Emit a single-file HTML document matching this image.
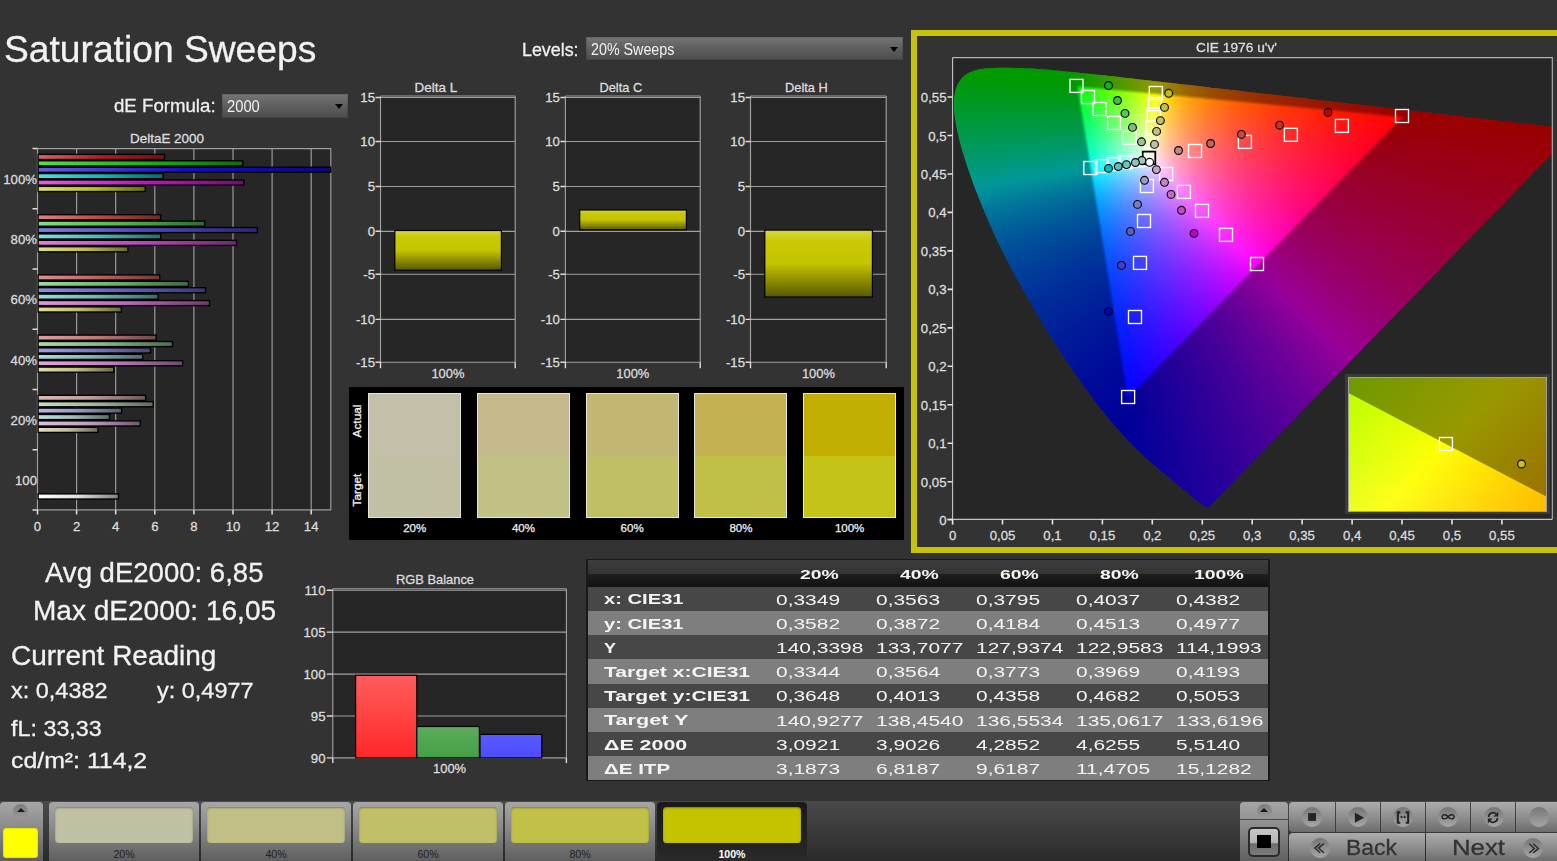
<!DOCTYPE html><html><head><meta charset="utf-8"><title>Saturation Sweeps</title><style>

html,body{margin:0;padding:0}
html{background:#333333;overflow:hidden}
body{width:1557px;height:861px;background:#333333;overflow:hidden;position:relative;font-family:"Liberation Sans",sans-serif;color:#e6e6e6}
.a{position:absolute}
.t{position:absolute;white-space:nowrap;line-height:1;transform-origin:0 50%}
svg{overflow:visible}
svg text{font-family:"Liberation Sans",sans-serif}
.dd{position:absolute;box-sizing:border-box;box-shadow:inset 0 0 0 1px rgba(0,0,0,.12);background:linear-gradient(#757575,#5e5e5e 50%,#4d4d4d)}
i{position:absolute;display:block}
.dd:after{content:"";position:absolute;right:5.2px;top:10.1px;border-left:4.4px solid transparent;border-right:4.4px solid transparent;border-top:5.2px solid #000}

</style></head><body>
<div class="t" style="left:4.4px;top:31.3px;font-size:37.40px;transform:scaleX(0.995);-webkit-text-stroke:.3px;color:#f2f2f2;">Saturation Sweeps</div>
<div class="t" style="left:113.6px;top:97.2px;font-size:18.40px;transform:scaleX(1.014);-webkit-text-stroke:.3px;color:#f0f0f0;">dE Formula:</div>
<div class="dd" style="left:221.6px;top:93.9px;width:126.6px;height:24.3px"></div>
<div class="t" style="left:226.7px;top:99.4px;font-size:16.00px;transform:scaleX(0.921);color:#f0f0f0;">2000</div>
<div class="t" style="left:522.0px;top:41.3px;font-size:18.00px;transform:scaleX(0.992);-webkit-text-stroke:.3px;color:#f0f0f0;">Levels:</div>
<div class="dd" style="left:585.6px;top:36.8px;width:317.6px;height:23.4px"></div>
<div class="t" style="left:591.0px;top:42.2px;font-size:16.00px;transform:scaleX(0.893);color:#f0f0f0;">20% Sweeps</div>
<svg class="a" style="left:0px;top:130px" width="350" height="412" viewBox="0 130 350 412" ><defs><linearGradient id="dR0"><stop offset="0" stop-color="#e06060"/><stop offset=".5" stop-color="#c01818"/><stop offset="1" stop-color="#701010"/></linearGradient><linearGradient id="dR1"><stop offset="0" stop-color="#e08080"/><stop offset=".5" stop-color="#c04848"/><stop offset="1" stop-color="#702828"/></linearGradient><linearGradient id="dR2"><stop offset="0" stop-color="#e09090"/><stop offset=".5" stop-color="#c06060"/><stop offset="1" stop-color="#703838"/></linearGradient><linearGradient id="dR3"><stop offset="0" stop-color="#e0a0a0"/><stop offset=".5" stop-color="#c07878"/><stop offset="1" stop-color="#704848"/></linearGradient><linearGradient id="dR4"><stop offset="0" stop-color="#e0b8b8"/><stop offset=".5" stop-color="#c09898"/><stop offset="1" stop-color="#705858"/></linearGradient><linearGradient id="dG0"><stop offset="0" stop-color="#50e050"/><stop offset=".5" stop-color="#18b818"/><stop offset="1" stop-color="#0c6c0c"/></linearGradient><linearGradient id="dG1"><stop offset="0" stop-color="#80e080"/><stop offset=".5" stop-color="#50b850"/><stop offset="1" stop-color="#2c6c2c"/></linearGradient><linearGradient id="dG2"><stop offset="0" stop-color="#98e098"/><stop offset=".5" stop-color="#68b868"/><stop offset="1" stop-color="#3c6c3c"/></linearGradient><linearGradient id="dG3"><stop offset="0" stop-color="#a8e0a8"/><stop offset=".5" stop-color="#80b880"/><stop offset="1" stop-color="#4c6c4c"/></linearGradient><linearGradient id="dG4"><stop offset="0" stop-color="#c0e0c0"/><stop offset=".5" stop-color="#a0b8a0"/><stop offset="1" stop-color="#5c6c5c"/></linearGradient><linearGradient id="dB0"><stop offset="0" stop-color="#6060e0"/><stop offset=".5" stop-color="#1010c8"/><stop offset="1" stop-color="#080880"/></linearGradient><linearGradient id="dB1"><stop offset="0" stop-color="#8080e0"/><stop offset=".5" stop-color="#4848c0"/><stop offset="1" stop-color="#282878"/></linearGradient><linearGradient id="dB2"><stop offset="0" stop-color="#9090e0"/><stop offset=".5" stop-color="#6060c0"/><stop offset="1" stop-color="#383878"/></linearGradient><linearGradient id="dB3"><stop offset="0" stop-color="#a0a0e0"/><stop offset=".5" stop-color="#7878c0"/><stop offset="1" stop-color="#484878"/></linearGradient><linearGradient id="dB4"><stop offset="0" stop-color="#b8b8e0"/><stop offset=".5" stop-color="#9898c0"/><stop offset="1" stop-color="#585878"/></linearGradient><linearGradient id="dC0"><stop offset="0" stop-color="#50e0e0"/><stop offset=".5" stop-color="#10b8b8"/><stop offset="1" stop-color="#086c6c"/></linearGradient><linearGradient id="dC1"><stop offset="0" stop-color="#80e0e0"/><stop offset=".5" stop-color="#50b8b8"/><stop offset="1" stop-color="#2c6c6c"/></linearGradient><linearGradient id="dC2"><stop offset="0" stop-color="#98e0e0"/><stop offset=".5" stop-color="#68b8b8"/><stop offset="1" stop-color="#3c6c6c"/></linearGradient><linearGradient id="dC3"><stop offset="0" stop-color="#a8e0e0"/><stop offset=".5" stop-color="#80b8b8"/><stop offset="1" stop-color="#4c6c6c"/></linearGradient><linearGradient id="dC4"><stop offset="0" stop-color="#c0e0e0"/><stop offset=".5" stop-color="#a0b8b8"/><stop offset="1" stop-color="#5c6c6c"/></linearGradient><linearGradient id="dM0"><stop offset="0" stop-color="#e060e0"/><stop offset=".5" stop-color="#c018c0"/><stop offset="1" stop-color="#701070"/></linearGradient><linearGradient id="dM1"><stop offset="0" stop-color="#e080e0"/><stop offset=".5" stop-color="#c048c0"/><stop offset="1" stop-color="#702870"/></linearGradient><linearGradient id="dM2"><stop offset="0" stop-color="#e098e0"/><stop offset=".5" stop-color="#c068c0"/><stop offset="1" stop-color="#703870"/></linearGradient><linearGradient id="dM3"><stop offset="0" stop-color="#e0a8e0"/><stop offset=".5" stop-color="#c080c0"/><stop offset="1" stop-color="#704870"/></linearGradient><linearGradient id="dM4"><stop offset="0" stop-color="#e0c0e0"/><stop offset=".5" stop-color="#c0a0c0"/><stop offset="1" stop-color="#705870"/></linearGradient><linearGradient id="dY0"><stop offset="0" stop-color="#e0e060"/><stop offset=".5" stop-color="#c0c018"/><stop offset="1" stop-color="#6c6c10"/></linearGradient><linearGradient id="dY1"><stop offset="0" stop-color="#e0e080"/><stop offset=".5" stop-color="#c0c050"/><stop offset="1" stop-color="#6c6c2c"/></linearGradient><linearGradient id="dY2"><stop offset="0" stop-color="#e0e098"/><stop offset=".5" stop-color="#c0c068"/><stop offset="1" stop-color="#6c6c3c"/></linearGradient><linearGradient id="dY3"><stop offset="0" stop-color="#e0e0a8"/><stop offset=".5" stop-color="#c0c080"/><stop offset="1" stop-color="#6c6c4c"/></linearGradient><linearGradient id="dY4"><stop offset="0" stop-color="#e0e0c0"/><stop offset=".5" stop-color="#c0c0a0"/><stop offset="1" stop-color="#6c6c5c"/></linearGradient><linearGradient id="dW"><stop offset="0" stop-color="#ffffff"/><stop offset=".5" stop-color="#e0e0e0"/><stop offset="1" stop-color="#808080"/></linearGradient></defs><rect x="37.5" y="148.6" width="293.2" height="361.3" fill="#262626"/><path d="M76.6 148.6V509.9M115.7 148.6V509.9M154.8 148.6V509.9M193.9 148.6V509.9M233.0 148.6V509.9M272.1 148.6V509.9M311.2 148.6V509.9M37.5 148.6V509.9M330.8 148.6V509.9M37.5 148.6H330.8M37.5 509.9H330.8" stroke="#9e9e9e" stroke-width="1.15" fill="none"/><path d="M76.6 509.9V514.4M115.7 509.9V514.4M154.8 509.9V514.4M193.9 509.9V514.4M233.0 509.9V514.4M272.1 509.9V514.4M311.2 509.9V514.4M37.5 509.9V514.4M32.5 148.6H37.5M32.5 208.8H37.5M32.5 269.0H37.5M32.5 329.3H37.5M32.5 389.5H37.5M32.5 449.7H37.5M32.5 509.9H37.5" stroke="#dedede" stroke-width="1.5" fill="none"/><rect x="38.1" y="154.4" width="126.5" height="5.1" fill="url(#dR0)" stroke="#000" stroke-width="1.35"/><rect x="38.1" y="160.8" width="204.7" height="5.1" fill="url(#dG0)" stroke="#000" stroke-width="1.35"/><rect x="38.1" y="167.2" width="292.6" height="5.1" fill="url(#dB0)" stroke="#000" stroke-width="1.35"/><rect x="38.1" y="173.6" width="125.1" height="5.1" fill="url(#dC0)" stroke="#000" stroke-width="1.35"/><rect x="38.1" y="180.0" width="205.7" height="5.1" fill="url(#dM0)" stroke="#000" stroke-width="1.35"/><rect x="38.1" y="186.4" width="107.2" height="5.1" fill="url(#dY0)" stroke="#000" stroke-width="1.35"/><rect x="38.1" y="214.7" width="122.6" height="5.1" fill="url(#dR1)" stroke="#000" stroke-width="1.35"/><rect x="38.1" y="221.1" width="166.6" height="5.1" fill="url(#dG1)" stroke="#000" stroke-width="1.35"/><rect x="38.1" y="227.5" width="219.3" height="5.1" fill="url(#dB1)" stroke="#000" stroke-width="1.35"/><rect x="38.1" y="233.9" width="122.6" height="5.1" fill="url(#dC1)" stroke="#000" stroke-width="1.35"/><rect x="38.1" y="240.3" width="198.4" height="5.1" fill="url(#dM1)" stroke="#000" stroke-width="1.35"/><rect x="38.1" y="246.7" width="89.8" height="5.1" fill="url(#dY1)" stroke="#000" stroke-width="1.35"/><rect x="38.1" y="274.9" width="121.6" height="5.1" fill="url(#dR2)" stroke="#000" stroke-width="1.35"/><rect x="38.1" y="281.3" width="150.3" height="5.1" fill="url(#dG2)" stroke="#000" stroke-width="1.35"/><rect x="38.1" y="287.7" width="167.5" height="5.1" fill="url(#dB2)" stroke="#000" stroke-width="1.35"/><rect x="38.1" y="294.1" width="120.0" height="5.1" fill="url(#dC2)" stroke="#000" stroke-width="1.35"/><rect x="38.1" y="300.5" width="171.4" height="5.1" fill="url(#dM2)" stroke="#000" stroke-width="1.35"/><rect x="38.1" y="306.9" width="83.2" height="5.1" fill="url(#dY2)" stroke="#000" stroke-width="1.35"/><rect x="38.1" y="335.1" width="118.1" height="5.1" fill="url(#dR3)" stroke="#000" stroke-width="1.35"/><rect x="38.1" y="341.5" width="134.3" height="5.1" fill="url(#dG3)" stroke="#000" stroke-width="1.35"/><rect x="38.1" y="347.9" width="112.4" height="5.1" fill="url(#dB3)" stroke="#000" stroke-width="1.35"/><rect x="38.1" y="354.3" width="104.6" height="5.1" fill="url(#dC3)" stroke="#000" stroke-width="1.35"/><rect x="38.1" y="360.7" width="144.5" height="5.1" fill="url(#dM3)" stroke="#000" stroke-width="1.35"/><rect x="38.1" y="367.1" width="75.7" height="5.1" fill="url(#dY3)" stroke="#000" stroke-width="1.35"/><rect x="38.1" y="395.3" width="107.5" height="5.1" fill="url(#dR4)" stroke="#000" stroke-width="1.35"/><rect x="38.1" y="401.7" width="115.1" height="5.1" fill="url(#dG4)" stroke="#000" stroke-width="1.35"/><rect x="38.1" y="408.1" width="83.5" height="5.1" fill="url(#dB4)" stroke="#000" stroke-width="1.35"/><rect x="38.1" y="414.5" width="71.3" height="5.1" fill="url(#dC4)" stroke="#000" stroke-width="1.35"/><rect x="38.1" y="420.9" width="102.2" height="5.1" fill="url(#dM4)" stroke="#000" stroke-width="1.35"/><rect x="38.1" y="427.3" width="59.9" height="5.1" fill="url(#dY4)" stroke="#000" stroke-width="1.35"/><rect x="38.1" y="493.9" width="80.3" height="5.1" fill="url(#dW)" stroke="#000" stroke-width="1.35"/><text x="37.0" y="183.9" font-size="13.20" fill="#dcdcdc" stroke="#dcdcdc" stroke-width=".3" text-anchor="end" >100%</text><text x="37.0" y="244.1" font-size="13.20" fill="#dcdcdc" stroke="#dcdcdc" stroke-width=".3" text-anchor="end" >80%</text><text x="37.0" y="304.3" font-size="13.20" fill="#dcdcdc" stroke="#dcdcdc" stroke-width=".3" text-anchor="end" >60%</text><text x="37.0" y="364.6" font-size="13.20" fill="#dcdcdc" stroke="#dcdcdc" stroke-width=".3" text-anchor="end" >40%</text><text x="37.0" y="424.8" font-size="13.20" fill="#dcdcdc" stroke="#dcdcdc" stroke-width=".3" text-anchor="end" >20%</text><text x="37.0" y="485.0" font-size="13.20" fill="#dcdcdc" stroke="#dcdcdc" stroke-width=".3" text-anchor="end" >100</text><text x="37.5" y="531.0" font-size="13.20" fill="#dcdcdc" stroke="#dcdcdc" stroke-width=".3" text-anchor="middle" >0</text><text x="76.6" y="531.0" font-size="13.20" fill="#dcdcdc" stroke="#dcdcdc" stroke-width=".3" text-anchor="middle" >2</text><text x="115.7" y="531.0" font-size="13.20" fill="#dcdcdc" stroke="#dcdcdc" stroke-width=".3" text-anchor="middle" >4</text><text x="154.8" y="531.0" font-size="13.20" fill="#dcdcdc" stroke="#dcdcdc" stroke-width=".3" text-anchor="middle" >6</text><text x="193.9" y="531.0" font-size="13.20" fill="#dcdcdc" stroke="#dcdcdc" stroke-width=".3" text-anchor="middle" >8</text><text x="233.0" y="531.0" font-size="13.20" fill="#dcdcdc" stroke="#dcdcdc" stroke-width=".3" text-anchor="middle" >10</text><text x="272.1" y="531.0" font-size="13.20" fill="#dcdcdc" stroke="#dcdcdc" stroke-width=".3" text-anchor="middle" >12</text><text x="311.2" y="531.0" font-size="13.20" fill="#dcdcdc" stroke="#dcdcdc" stroke-width=".3" text-anchor="middle" >14</text><text x="167.0" y="143.0" font-size="13.20" fill="#dcdcdc" stroke="#dcdcdc" stroke-width=".3" text-anchor="middle" textLength="74.0" lengthAdjust="spacingAndGlyphs" >DeltaE 2000</text></svg>
<svg class="a" style="left:345px;top:75px" width="560" height="310" viewBox="345 75 560 310" ><defs><linearGradient id="yb" x1="0" y1="0" x2="0" y2="1"><stop offset="0" stop-color="#d8d848"/><stop offset=".16" stop-color="#c9c906"/><stop offset=".5" stop-color="#c4c400"/><stop offset="1" stop-color="#585800"/></linearGradient></defs><rect x="380.5" y="96.2" width="134.7" height="266.0" fill="#262626"/><path d="M380.5 97.5H515.2M380.5 141.5H515.2M380.5 186.5H515.2M380.5 231.3H515.2M380.5 274.2H515.2M380.5 319.4H515.2M380.5 362.2H515.2M380.5 96.0H515.2M380.5 96.0V362.2M515.2 96.0V362.2" stroke="#a0a0a0" stroke-width="1.15" fill="none"/><path d="M375.5 97.5H380.5M375.5 141.5H380.5M375.5 186.5H380.5M375.5 231.3H380.5M375.5 274.2H380.5M375.5 319.4H380.5M375.5 362.2H380.5M380.5 362.2V368.2M515.2 362.2V368.2" stroke="#dcdcdc" stroke-width="1.4" fill="none"/><rect x="394.8" y="230.5" width="106.6" height="39.7" fill="url(#yb)" stroke="#000" stroke-width="1.2"/><text x="375.0" y="102.4" font-size="13.20" fill="#dcdcdc" stroke="#dcdcdc" stroke-width=".3" text-anchor="end" >15</text><text x="375.0" y="146.4" font-size="13.20" fill="#dcdcdc" stroke="#dcdcdc" stroke-width=".3" text-anchor="end" >10</text><text x="375.0" y="191.4" font-size="13.20" fill="#dcdcdc" stroke="#dcdcdc" stroke-width=".3" text-anchor="end" >5</text><text x="375.0" y="236.2" font-size="13.20" fill="#dcdcdc" stroke="#dcdcdc" stroke-width=".3" text-anchor="end" >0</text><text x="375.0" y="279.1" font-size="13.20" fill="#dcdcdc" stroke="#dcdcdc" stroke-width=".3" text-anchor="end" >-5</text><text x="375.0" y="324.3" font-size="13.20" fill="#dcdcdc" stroke="#dcdcdc" stroke-width=".3" text-anchor="end" >-10</text><text x="375.0" y="367.1" font-size="13.20" fill="#dcdcdc" stroke="#dcdcdc" stroke-width=".3" text-anchor="end" >-15</text><text x="435.9" y="92.0" font-size="13.20" fill="#dcdcdc" stroke="#dcdcdc" stroke-width=".3" text-anchor="middle" textLength="42.7" lengthAdjust="spacingAndGlyphs" >Delta L</text><text x="447.9" y="378.1" font-size="13.20" fill="#dcdcdc" stroke="#dcdcdc" stroke-width=".3" text-anchor="middle" textLength="33.0" lengthAdjust="spacingAndGlyphs" >100%</text><rect x="565.4" y="96.2" width="134.8" height="266.0" fill="#262626"/><path d="M565.4 97.5H700.2M565.4 141.5H700.2M565.4 186.5H700.2M565.4 231.3H700.2M565.4 274.2H700.2M565.4 319.4H700.2M565.4 362.2H700.2M565.4 96.0H700.2M565.4 96.0V362.2M700.2 96.0V362.2" stroke="#a0a0a0" stroke-width="1.15" fill="none"/><path d="M560.4 97.5H565.4M560.4 141.5H565.4M560.4 186.5H565.4M560.4 231.3H565.4M560.4 274.2H565.4M560.4 319.4H565.4M560.4 362.2H565.4M565.4 362.2V368.2M700.2 362.2V368.2" stroke="#dcdcdc" stroke-width="1.4" fill="none"/><rect x="579.7" y="210.0" width="106.7" height="19.8" fill="url(#yb)" stroke="#000" stroke-width="1.2"/><text x="559.9" y="102.4" font-size="13.20" fill="#dcdcdc" stroke="#dcdcdc" stroke-width=".3" text-anchor="end" >15</text><text x="559.9" y="146.4" font-size="13.20" fill="#dcdcdc" stroke="#dcdcdc" stroke-width=".3" text-anchor="end" >10</text><text x="559.9" y="191.4" font-size="13.20" fill="#dcdcdc" stroke="#dcdcdc" stroke-width=".3" text-anchor="end" >5</text><text x="559.9" y="236.2" font-size="13.20" fill="#dcdcdc" stroke="#dcdcdc" stroke-width=".3" text-anchor="end" >0</text><text x="559.9" y="279.1" font-size="13.20" fill="#dcdcdc" stroke="#dcdcdc" stroke-width=".3" text-anchor="end" >-5</text><text x="559.9" y="324.3" font-size="13.20" fill="#dcdcdc" stroke="#dcdcdc" stroke-width=".3" text-anchor="end" >-10</text><text x="559.9" y="367.1" font-size="13.20" fill="#dcdcdc" stroke="#dcdcdc" stroke-width=".3" text-anchor="end" >-15</text><text x="620.8" y="92.0" font-size="13.20" fill="#dcdcdc" stroke="#dcdcdc" stroke-width=".3" text-anchor="middle" textLength="42.7" lengthAdjust="spacingAndGlyphs" >Delta C</text><text x="632.8" y="378.1" font-size="13.20" fill="#dcdcdc" stroke="#dcdcdc" stroke-width=".3" text-anchor="middle" textLength="33.0" lengthAdjust="spacingAndGlyphs" >100%</text><rect x="750.5" y="96.2" width="135.7" height="266.0" fill="#262626"/><path d="M750.5 97.5H886.2M750.5 141.5H886.2M750.5 186.5H886.2M750.5 231.3H886.2M750.5 274.2H886.2M750.5 319.4H886.2M750.5 362.2H886.2M750.5 96.0H886.2M750.5 96.0V362.2M886.2 96.0V362.2" stroke="#a0a0a0" stroke-width="1.15" fill="none"/><path d="M745.5 97.5H750.5M745.5 141.5H750.5M745.5 186.5H750.5M745.5 231.3H750.5M745.5 274.2H750.5M745.5 319.4H750.5M745.5 362.2H750.5M750.5 362.2V368.2M886.2 362.2V368.2" stroke="#dcdcdc" stroke-width="1.4" fill="none"/><rect x="764.8" y="230.1" width="107.6" height="66.9" fill="url(#yb)" stroke="#000" stroke-width="1.2"/><text x="745.0" y="102.4" font-size="13.20" fill="#dcdcdc" stroke="#dcdcdc" stroke-width=".3" text-anchor="end" >15</text><text x="745.0" y="146.4" font-size="13.20" fill="#dcdcdc" stroke="#dcdcdc" stroke-width=".3" text-anchor="end" >10</text><text x="745.0" y="191.4" font-size="13.20" fill="#dcdcdc" stroke="#dcdcdc" stroke-width=".3" text-anchor="end" >5</text><text x="745.0" y="236.2" font-size="13.20" fill="#dcdcdc" stroke="#dcdcdc" stroke-width=".3" text-anchor="end" >0</text><text x="745.0" y="279.1" font-size="13.20" fill="#dcdcdc" stroke="#dcdcdc" stroke-width=".3" text-anchor="end" >-5</text><text x="745.0" y="324.3" font-size="13.20" fill="#dcdcdc" stroke="#dcdcdc" stroke-width=".3" text-anchor="end" >-10</text><text x="745.0" y="367.1" font-size="13.20" fill="#dcdcdc" stroke="#dcdcdc" stroke-width=".3" text-anchor="end" >-15</text><text x="806.4" y="92.0" font-size="13.20" fill="#dcdcdc" stroke="#dcdcdc" stroke-width=".3" text-anchor="middle" textLength="42.7" lengthAdjust="spacingAndGlyphs" >Delta H</text><text x="818.4" y="378.1" font-size="13.20" fill="#dcdcdc" stroke="#dcdcdc" stroke-width=".3" text-anchor="middle" textLength="33.0" lengthAdjust="spacingAndGlyphs" >100%</text></svg>
<div class="a" style="left:349px;top:387px;width:555px;height:153px;background:#000"></div>
<div class="a" style="left:368.2px;top:393px;width:91px;height:123px;border:1px solid #e6e6de;background:linear-gradient(#c4bfa9 50%,#c1c0a4 50%)"></div>
<div class="t" style="left:403.2px;top:522.5px;font-size:11.50px;color:#f4f4f4;-webkit-text-stroke:.25px;">20%</div>
<div class="a" style="left:476.9px;top:393px;width:91px;height:123px;border:1px solid #e6e6de;background:linear-gradient(#c4ba8c 50%,#c1c085 50%)"></div>
<div class="t" style="left:511.9px;top:522.5px;font-size:11.50px;color:#f4f4f4;-webkit-text-stroke:.25px;">40%</div>
<div class="a" style="left:585.6px;top:393px;width:91px;height:123px;border:1px solid #e6e6de;background:linear-gradient(#c3b672 50%,#c0bf66 50%)"></div>
<div class="t" style="left:620.6px;top:522.5px;font-size:11.50px;color:#f4f4f4;-webkit-text-stroke:.25px;">60%</div>
<div class="a" style="left:694.4px;top:393px;width:91px;height:123px;border:1px solid #e6e6de;background:linear-gradient(#c4b252 50%,#c0c047 50%)"></div>
<div class="t" style="left:729.4px;top:522.5px;font-size:11.50px;color:#f4f4f4;-webkit-text-stroke:.25px;">80%</div>
<div class="a" style="left:803.1px;top:393px;width:91px;height:123px;border:1px solid #e6e6de;background:linear-gradient(#c2ae00 50%,#c3c318 50%)"></div>
<div class="t" style="left:834.9px;top:522.5px;font-size:11.50px;color:#f4f4f4;-webkit-text-stroke:.25px;">100%</div>
<div class="t" style="left:357.6px;top:420.5px;font-size:11.8px;-webkit-text-stroke:.3px;color:#f4f4f4;transform:translate(-50%,-50%) rotate(-90deg);transform-origin:50% 50%">Actual</div>
<div class="t" style="left:357.6px;top:489.5px;font-size:11.8px;-webkit-text-stroke:.3px;color:#f4f4f4;transform:translate(-50%,-50%) rotate(-90deg);transform-origin:50% 50%">Target</div>
<div class="a" style="left:911px;top:29.6px;width:652px;height:523px;box-sizing:border-box;border:6.4px solid #c7c30a"></div>
<div class="t" style="left:1195.5px;top:41.1px;font-size:13.20px;transform:scaleX(1.043);color:#dcdcdc;-webkit-text-stroke:.3px;">CIE 1976 u'v'</div>
<div class="a" style="left:953px;top:58px;width:599px;height:461px;background:#262626"></div>
<div class="a cf" style="left:953px;top:58px;width:599px;height:461px;overflow:hidden;clip-path:path('M256.2 448.7L253.2 449.1L250.1 447.5L247.0 445.2L244.6 443.3L241.6 440.9L238.1 438.0L235.5 435.7L232.7 433.3L229.5 430.7L226.0 427.8L222.1 424.6L217.8 421.0L213.1 417.1L210.7 415.1L208.1 413.0L205.5 410.7L202.7 408.4L199.8 405.9L196.8 403.2L193.6 400.4L190.4 397.5L187.1 394.3L183.6 391.1L180.1 387.6L176.4 383.8L172.5 379.8L168.4 375.3L164.0 370.3L159.3 364.7L154.3 358.7L149.0 352.2L143.6 345.2L138.0 337.8L132.2 330.0L126.3 321.8L120.3 313.1L114.2 304.0L107.9 294.5L101.5 284.5L95.1 274.2L88.7 263.7L82.3 252.9L76.0 242.0L69.6 231.0L63.5 219.9L57.4 208.8L51.7 197.6L46.2 186.6L41.2 175.7L36.4 165.1L31.9 154.7L27.7 144.5L23.8 134.8L20.2 125.3L17.0 116.3L14.1 107.8L11.5 99.8L9.2 92.2L7.2 85.1L5.6 78.5L4.2 72.3L3.1 66.5L2.2 61.1L1.5 56.1L1.1 51.5L1.0 47.3L1.0 43.3L1.3 39.6L1.7 36.2L2.4 33.0L3.2 30.1L5.4 25.0L8.4 20.7L11.9 17.3L15.9 14.7L20.3 12.9L25.1 11.6L30.2 10.8L35.6 10.2L41.1 9.9L46.8 9.8L52.4 9.8L58.1 9.8L63.9 10.0L69.7 10.2L75.7 10.5L78.7 10.6L81.9 10.8L85.0 11.1L88.2 11.3L91.5 11.5L94.8 11.8L98.1 12.1L101.5 12.4L105.0 12.7L108.6 13.0L112.2 13.4L115.9 13.7L119.6 14.1L123.5 14.5L127.4 14.9L131.4 15.3L135.4 15.8L139.6 16.2L143.8 16.7L148.1 17.1L152.6 17.6L157.1 18.1L161.7 18.6L166.4 19.1L171.1 19.7L176.0 20.2L181.0 20.8L186.1 21.4L191.3 21.9L196.6 22.5L202.0 23.2L207.5 23.8L213.1 24.4L218.8 25.1L224.6 25.8L230.5 26.4L236.6 27.1L242.7 27.8L248.9 28.6L255.2 29.3L261.7 30.0L268.2 30.8L274.8 31.5L281.5 32.3L288.3 33.1L295.2 33.9L302.2 34.7L309.2 35.5L316.3 36.3L323.5 37.1L330.7 38.0L338.0 38.8L345.4 39.7L352.7 40.5L360.0 41.4L367.3 42.2L374.5 43.0L381.6 43.8L388.7 44.7L395.7 45.5L402.7 46.3L409.7 47.1L416.7 47.9L423.6 48.7L430.5 49.5L437.1 50.2L443.7 51.0L450.0 51.7L456.2 52.4L462.3 53.1L468.3 53.8L474.1 54.5L479.7 55.1L485.2 55.8L490.6 56.4L495.8 57.0L500.8 57.6L505.7 58.1L510.4 58.7L514.9 59.2L519.3 59.7L523.5 60.2L527.6 60.6L531.5 61.1L535.3 61.5L539.0 61.9L542.5 62.3L545.9 62.7L549.2 63.1L552.4 63.5L555.5 63.8L558.6 64.2L564.4 64.9L569.9 65.5L575.0 66.1L579.8 66.6L584.2 67.2L588.3 67.6L592.0 68.0L595.2 68.4L599.5 68.9L603.2 69.3L606.4 69.7L609.8 70.1L613.2 70.5L616.3 70.9L619.6 71.2L622.3 71.6Z')"><i style="top:8px;left:39px;width:27px;height:2px;background:linear-gradient(90deg,#0f0 0.5px,#0f0 22.5px,#0f0 26.5px)"></i><i style="top:10px;left:23px;width:74px;height:2px;background:linear-gradient(90deg,#0f0 0.5px,#0f0 66.5px,#0f0 72.5px,#0f0 73.5px)"></i><i style="top:12px;left:16px;width:102px;height:2px;background:linear-gradient(90deg,#0f0 0.5px,#0f0 88.5px,#0f0 101.5px)"></i><i style="top:14px;left:11px;width:127px;height:2px;background:linear-gradient(90deg,#0f0 0.5px,#0f0 88.5px,#02ff00 110.5px,#25ff00 123.5px,#2eff00 126.5px)"></i><i style="top:16px;left:9px;width:146px;height:2px;background:linear-gradient(90deg,#00ff01 0.5px,#0f0 88.5px,#0f0 110.5px,#07ff00 115.5px,#5bff00 144.5px,#5eff00 145.5px)"></i><i style="top:18px;left:7px;width:167px;height:2px;background:linear-gradient(90deg,#00ff05 0.5px,#0f0 66.5px,#0f0 104.5px,#01ff00 114.5px,#0fff00 120.5px,#7eff00 158.5px,#96ff00 166.5px)"></i><i style="top:20px;left:5px;width:189px;height:2px;background:linear-gradient(90deg,#00ff09 0.5px,#0f0 66.5px,#01ff00 116.5px,#0eff00 122.5px,#a3ff00 172.5px,#cdff00 185.5px,#d7ff00 188.5px)"></i><i style="top:22px;left:4px;width:206px;height:2px;background:linear-gradient(90deg,#00ff0e 0.5px,#0f0 88.5px,#01ff00 117.5px,#0aff00 122.5px,#a0ff00 172.5px,#e9ff00 194.5px,#fcfc00 200.5px,#fe0 205.5px)"></i><i style="top:24px;left:3px;width:224px;height:2px;background:linear-gradient(90deg,#00ff12 0.5px,#00ff02 88.5px,#0f0 117.5px,#07ff00 122.5px,#9cff00 172.5px,#e6ff00 194.5px,#fafd00 200.5px,#ffed00 206.5px,#ffbe00 223.5px)"></i><i style="top:26px;left:2px;width:243px;height:2px;background:linear-gradient(90deg,#00ff16 0.5px,#00ff01 117.5px,#03ff01 122.5px,#9f0 172.5px,#fbfd00 201.5px,#ffed00 207.5px,#ffbd00 224.5px,#ff9b00 241.5px,#f90 242.5px)"></i><i style="top:28px;left:1px;width:257px;height:2px;background:linear-gradient(90deg,#00ff1b 0.5px,#00ff05 117.5px,#03ff04 123.5px,#9f0 173.5px,#fbfd00 202.5px,#ffec00 208.5px,#ffc600 221.5px,#ffa100 238.5px,#ff8500 255.5px,#ff8400 256.5px)"></i><i style="top:30px;left:1px;width:276px;height:2px;background:linear-gradient(90deg,#00ff1f 0.5px,#00ff0a 117.5px,#02ff09 123.5px,#99ff01 173.5px,#e4ff00 195.5px,#f9fe00 201.5px,#fff200 206.5px,#ffcb00 219.5px,#ffa500 236.5px,#ff8000 258.5px,#ff6b00 275.5px)"></i><i style="top:32px;left:0px;width:298px;height:2px;background:linear-gradient(90deg,#00ff23 0.5px,#00ff10 117.5px,#04ff0e 125.5px,#9dff03 175.5px,#e8ff01 197.5px,#fcfc00 203.5px,#ffde00 213.5px,#ffb200 230.5px,#ff8a00 252.5px,#ff6500 281.5px,#ff5800 294.5px,#ff5600 297.5px)"></i><i style="top:34px;left:0px;width:312px;height:2px;background:linear-gradient(90deg,#00ff27 0.5px,#00ff16 117.5px,#03ff14 125.5px,#9dff08 175.5px,#e9ff03 197.5px,#fcfc02 203.5px,#ffd401 216.5px,#ffab00 233.5px,#ff8500 255.5px,#ff6100 284.5px,#ff4d00 306.5px,#ff4a00 311.5px)"></i><i style="top:36px;left:0px;width:333px;height:2px;background:linear-gradient(90deg,#00ff2b 0.5px,#00ff1b 117.5px,#02ff1a 125.5px,#76ff11 163.5px,#d7ff0a 192.5px,#fafd07 202.5px,#ffec05 208.5px,#ffc602 221.5px,#ffa001 238.5px,#ff7d00 260.5px,#ff5c00 289.5px,#ff3d00 327.5px,#ff3a00 332.5px)"></i><i style="top:38px;left:0px;width:348px;height:2px;background:linear-gradient(90deg,#00ff2f 0.5px,#00ff21 117.5px,#02ff1f 125.5px,#35ff1c 142.5px,#adff14 180.5px,#fbfd0e 202.5px,#ffeb0b 208.5px,#ffc506 221.5px,#ff9f02 238.5px,#ff7c00 260.5px,#ff5b00 289.5px,#ff3d00 327.5px,#ff3200 344.5px,#ff3100 347.5px)"></i><i style="top:40px;left:0px;width:363px;height:2px;background:linear-gradient(90deg,#0f3 0.5px,#00ff26 117.5px,#02ff25 125.5px,#18ff24 133.5px,#8fff1d 171.5px,#f6ff16 200.5px,#fef814 204.5px,#ffc40c 221.5px,#ff9f06 238.5px,#ff7b02 260.5px,#ff5a00 289.5px,#ff3c00 327.5px,#ff2b00 356.5px,#ff2800 362.5px)"></i><i style="top:42px;left:0px;width:384px;height:2px;background:linear-gradient(90deg,#00ff37 0.5px,#00ff2c 117.5px,#01ff2b 125.5px,#11ff2a 131.5px,#89ff24 169.5px,#efff1e 198.5px,#fdfa1c 203.5px,#ffc613 220.5px,#ffa00c 237.5px,#ff7c06 259.5px,#ff5a01 288.5px,#ff3c00 326.5px,#ff2100 376.5px,#ff1e00 382.5px,#ff1e00 383.5px)"></i><i style="top:44px;left:0px;width:398px;height:2px;background:linear-gradient(90deg,#00ff3b 0.5px,#00ff31 117.5px,#01ff30 125.5px,#0cff30 130.5px,#85ff2a 168.5px,#ecff25 197.5px,#fcfc24 202.5px,#ffdc1d 212.5px,#ffaf15 229.5px,#ff870c 251.5px,#ff6205 280.5px,#ff4101 318.5px,#ff2400 368.5px,#ff1700 397.5px)"></i><i style="top:46px;left:0px;width:419px;height:2px;background:linear-gradient(90deg,#00ff3f 0.5px,#00ff36 117.5px,#03ff35 127.5px,#7bff31 165.5px,#e1ff2d 194.5px,#fcfc2b 202.5px,#ffd222 215.5px,#ffa819 232.5px,#ff8110 254.5px,#ff5e08 283.5px,#ff3e02 321.5px,#f20 371.5px,#ff1200 409.5px,#ff0f00 417.5px,#ff0f00 418.5px)"></i><i style="top:48px;left:0px;width:433px;height:2px;background:linear-gradient(90deg,#00ff43 0.5px,#00ff3c 117.5px,#03ff3b 127.5px,#7bff37 165.5px,#e1ff34 194.5px,#f8fe33 200.5px,#fff230 205.5px,#ffc926 218.5px,#ffa11c 235.5px,#ff7c14 257.5px,#ff5a0b 286.5px,#ff3b04 324.5px,#ff2000 374.5px,#ff0c00 424.5px,#ff0900 432.5px)"></i><i style="top:50px;left:0px;width:453px;height:2px;background:linear-gradient(90deg,#00ff47 0.5px,#00ff41 117.5px,#02ff41 127.5px,#37ff3f 144.5px,#96ff3d 173.5px,#e6ff3b 195.5px,#fbfd39 201.5px,#ffea35 207.5px,#ffc32a 220.5px,#ff9c21 237.5px,#ff7917 259.5px,#ff570f 288.5px,#ff3906 326.5px,#ff1e01 376.5px,#ff0500 442.5px,#ff0200 452.5px)"></i><i style="top:52px;left:0px;width:471px;height:2px;background:linear-gradient(90deg,#00ff4b 0.5px,#00ff47 117.5px,#02ff46 127.5px,#19ff46 135.5px,#96ff43 173.5px,#e6ff42 195.5px,#fbfc41 201.5px,#ffe339 209.5px,#ffbd2f 222.5px,#ff9824 239.5px,#ff751b 261.5px,#ff5512 290.5px,#ff3709 328.5px,#ff1601 394.5px,#f00 460.5px,#f00 470.5px)"></i><i style="top:54px;left:0px;width:488px;height:2px;background:linear-gradient(90deg,#00ff4f 0.5px,#00ff4c 117.5px,#01ff4c 127.5px,#11ff4c 133.5px,#8fff4a 171.5px,#f9fd48 200.5px,#fff044 205.5px,#ffc638 218.5px,#ff9f2c 235.5px,#ff7a21 257.5px,#ff5816 286.5px,#ff390d 324.5px,#ff1e05 374.5px,#ff0500 440.5px,#f00 462.5px,#f00 484.5px,#f00 487.5px)"></i><i style="top:56px;left:0px;width:503px;height:2px;background:linear-gradient(90deg,#00ff53 0.5px,#00ff52 117.5px,#01ff51 127.5px,#0dff51 132.5px,#8bff51 170.5px,#f7fe50 199.5px,#fef64d 203.5px,#ffcb3f 216.5px,#ffa232 233.5px,#ff7c26 255.5px,#ff591b 284.5px,#ff3a11 322.5px,#ff1e08 372.5px,#ff0501 438.5px,#f00 460.5px,#f00 498.5px,#f00 502.5px)"></i><i style="top:58px;left:0px;width:522px;height:2px;background:linear-gradient(90deg,#00ff57 0.5px,#00ff57 117.5px,#01ff57 127.5px,#0cff57 132.5px,#8bff57 170.5px,#f7fe57 199.5px,#fef554 203.5px,#ffca45 216.5px,#ffa137 233.5px,#ff7b2a 255.5px,#ff581e 284.5px,#ff3914 322.5px,#ff1e0a 372.5px,#ff0402 438.5px,#ff0001 460.5px,#f00 510.5px,#f00 520.5px,#f00 521.5px)"></i><i style="top:60px;left:0px;width:541px;height:2px;background:linear-gradient(90deg,#00ff5b 0.5px,#00ff5c 117.5px,#01ff5d 127.5px,#0bff5d 132.5px,#8bff5e 170.5px,#f8fe5e 199.5px,#fff55b 203.5px,#ffca4b 216.5px,#ffa03c 233.5px,#ff7a2e 255.5px,#ff5722 284.5px,#ff3917 322.5px,#ff1d0d 372.5px,#ff0404 438.5px,#ff0002 460.5px,#f00 526.5px,#f00 539.5px,#f00 540.5px)"></i><i style="top:62px;left:0px;width:558px;height:2px;background:linear-gradient(90deg,#00ff5f 0.5px,#00ff62 117.5px,#00ff62 127.5px,#0aff63 132.5px,#8bff64 170.5px,#f8fe65 199.5px,#fff060 204.5px,#ffc650 217.5px,#ff9d40 234.5px,#ff7832 256.5px,#ff5625 285.5px,#ff3719 323.5px,#ff1c0f 373.5px,#ff0306 439.5px,#ff0001 489.5px,#f00 555.5px,#f00 557.5px)"></i><i style="top:64px;left:1px;width:574px;height:2px;background:linear-gradient(90deg,#00ff63 0.5px,#00ff68 117.5px,#01ff68 127.5px,#0cff68 132.5px,#8eff6b 170.5px,#e2ff6d 192.5px,#f9fe6c 198.5px,#fff067 203.5px,#ffc556 216.5px,#ff9c45 233.5px,#ff7736 255.5px,#ff5528 284.5px,#ff361c 322.5px,#ff1b11 372.5px,#ff0208 438.5px,#f00 526.5px,#f00 564.5px,#f00 572.5px,#f00 573.5px)"></i><i style="top:66px;left:1px;width:592px;height:2px;background:linear-gradient(90deg,#00ff67 0.5px,#00ff6d 117.5px,#01ff6e 127.5px,#0bff6e 132.5px,#8eff72 170.5px,#e2ff74 192.5px,#f9fd74 198.5px,#ffef6e 203.5px,#ffc45b 216.5px,#ff9b4a 233.5px,#ff763a 255.5px,#ff542c 284.5px,#ff361f 322.5px,#ff1b14 372.5px,#ff010a 438.5px,#f00 555.5px,#f00 584.5px,#f00 590.5px,#f00 591.5px)"></i><i style="top:68px;left:1px;width:598px;height:2px;background:linear-gradient(90deg,#00ff6b 0.5px,#00ff73 117.5px,#00ff74 127.5px,#0aff74 132.5px,#8eff78 170.5px,#e3ff7b 192.5px,#fafd7b 198.5px,#ffee74 203.5px,#ffc361 216.5px,#ff9b4f 233.5px,#ff753e 255.5px,#ff532f 284.5px,#ff3522 322.5px,#ff1a16 372.5px,#ff010c 438.5px,#ff0001 555.5px,#f00 593.5px,#f00 597.5px)"></i><i style="top:70px;left:2px;width:597px;height:2px;background:linear-gradient(90deg,#00ff70 0.5px,#00ff79 117.5px,#01ff7a 127.5px,#0dff7a 132.5px,#92ff7f 170.5px,#e8ff83 192.5px,#fcfb82 198.5px,#ffc267 215.5px,#ff9a54 232.5px,#ff7542 254.5px,#ff5333 283.5px,#ff3425 321.5px,#ff1918 371.5px,#ff000e 437.5px,#f00 593.5px,#f00 596.5px)"></i><i style="top:72px;left:2px;width:597px;height:2px;background:linear-gradient(90deg,#00ff74 0.5px,#00ff7e 117.5px,#01ff80 127.5px,#0cff80 132.5px,#92ff86 170.5px,#e8ff8a 192.5px,#fdfa89 198.5px,#ffc16d 215.5px,#ff9959 232.5px,#ff7447 254.5px,#ff5236 283.5px,#ff3427 321.5px,#ff191b 371.5px,#ff0010 437.5px,#ff0001 593.5px,#ff0001 596.5px)"></i><i style="top:74px;left:2px;width:597px;height:2px;background:linear-gradient(90deg,#00ff78 0.5px,#00ff84 117.5px,#00ff86 127.5px,#07ff86 131.5px,#8eff8d 169.5px,#e5ff92 191.5px,#fbfc91 197.5px,#ffe887 203.5px,#ffbe71 216.5px,#ff965d 233.5px,#ff714a 255.5px,#ff5039 284.5px,#ff322a 322.5px,#ff111a 388.5px,#ff0012 438.5px,#ff0002 594.5px,#ff0002 596.5px)"></i><i style="top:76px;left:3px;width:596px;height:2px;background:linear-gradient(90deg,#00ff7c 0.5px,#00ff8a 117.5px,#01ff8c 127.5px,#0dff8d 132.5px,#95ff94 170.5px,#eeff9a 192.5px,#fdf998 197.5px,#ffcb7f 210.5px,#ff9f67 227.5px,#ff7852 249.5px,#ff543f 278.5px,#ff352e 316.5px,#ff1920 366.5px,#ff0014 432.5px,#ff0004 588.5px,#ff0003 594.5px,#ff0003 595.5px)"></i><i style="top:78px;left:3px;width:596px;height:2px;background:linear-gradient(90deg,#00ff81 0.5px,#00ff90 117.5px,#01ff92 127.5px,#09ff93 131.5px,#91ff9b 169.5px,#eaffa1 191.5px,#fcfba0 196.5px,#ffd88c 206.5px,#ffb177 219.5px,#ff8c62 236.5px,#ff6a4f 258.5px,#ff4b3e 287.5px,#ff2e2e 325.5px,#ff0e1d 391.5px,#ff0016 429.5px,#ff0006 585.5px,#ff0005 595.5px)"></i><i style="top:80px;left:4px;width:595px;height:2px;background:linear-gradient(90deg,#00ff85 0.5px,#00ff96 117.5px,#01ff98 127.5px,#0fff99 132.5px,#99ffa3 170.5px,#f3ffaa 192.5px,#fef8a6 196.5px,#ffca8b 209.5px,#ff9e71 226.5px,#ff765a 248.5px,#ff5246 277.5px,#ff3334 315.5px,#ff1825 365.5px,#ff041b 415.5px,#ff0017 437.5px,#ff0006 593.5px,#ff0006 594.5px)"></i><i style="top:82px;left:4px;width:595px;height:2px;background:linear-gradient(90deg,#00ff89 0.5px,#00ff9c 117.5px,#01ff9e 127.5px,#0dffa0 132.5px,#9fa 170.5px,#f4ffb2 192.5px,#fef7ae 196.5px,#ffc992 209.5px,#ff9d77 226.5px,#ff755f 248.5px,#ff5249 277.5px,#ff3337 315.5px,#ff1727 365.5px,#ff031c 415.5px,#ff0018 444.5px,#ff000a 561.5px,#ff0008 590.5px,#ff0008 594.5px)"></i><i style="top:84px;left:5px;width:594px;height:2px;background:linear-gradient(90deg,#00ff8e 0.5px,#00ffa2 117.5px,#02ffa5 127.5px,#14ffa6 133.5px,#a1ffb2 171.5px,#e8ffb9 188.5px,#fbfcb9 193.5px,#ffe7ac 199.5px,#ffbc90 212.5px,#ff9376 229.5px,#ff6e5f 251.5px,#ff4d4a 280.5px,#ff2f38 318.5px,#ff0e24 384.5px,#ff001d 422.5px,#ff000a 578.5px,#ff0009 591.5px,#ff0009 593.5px)"></i><i style="top:86px;left:5px;width:594px;height:2px;background:linear-gradient(90deg,#00ff92 0.5px,#00ffa9 117.5px,#01ffab 127.5px,#0fffad 132.5px,#9dffb9 170.5px,#f9fdc1 192.5px,#fff2ba 196.5px,#ffc49c 209.5px,#ff997f 226.5px,#ff7266 248.5px,#ff4f4f 277.5px,#ff303c 315.5px,#ff152b 365.5px,#ff0120 415.5px,#ff000c 571.5px,#ff000a 593.5px)"></i><i style="top:88px;left:6px;width:593px;height:2px;background:linear-gradient(90deg,#00ff97 0.5px,#00ffaf 117.5px,#02ffb2 127.5px,#16ffb4 133.5px,#a5ffc2 171.5px,#edffca 188.5px,#fcfbc8 192.5px,#ffdeb4 200.5px,#ffb498 213.5px,#ff8d7e 230.5px,#ff6a65 252.5px,#ff4950 281.5px,#ff2c3d 319.5px,#ff0c28 385.5px,#ff0122 414.5px,#ff000e 570.5px,#ff000c 592.5px)"></i><i style="top:90px;left:6px;width:593px;height:2px;background:linear-gradient(90deg,#00ff9b 0.5px,#00ffad 88.5px,#01ffb8 126.5px,#09ffb9 130.5px,#99ffc8 168.5px,#f6fed2 190.5px,#fef4cc 194.5px,#ffc5aa 207.5px,#ff998b 224.5px,#ff716f 246.5px,#ff4e57 275.5px,#ff2f42 313.5px,#ff1430 363.5px,#ff0024 413.5px,#ff0013 530.5px,#ff000e 580.5px,#ff000d 590.5px,#ff000d 592.5px)"></i><i style="top:92px;left:7px;width:592px;height:2px;background:linear-gradient(90deg,#00ffa0 0.5px,#00ffb3 88.5px,#01ffbf 126.5px,#0fffc1 131.5px,#a1ffd1 169.5px,#eaffda 186.5px,#fcfad8 191.5px,#ffcab5 204.5px,#ffa69a 217.5px,#ff8281 234.5px,#ff6169 256.5px,#ff4353 285.5px,#ff2840 323.5px,#ff082b 389.5px,#ff0026 411.5px,#ff0014 528.5px,#ff000f 578.5px,#ff000e 591.5px)"></i><i style="top:94px;left:8px;width:591px;height:2px;background:linear-gradient(90deg,#00ffa4 0.5px,#00ffb9 88.5px,#00ffc3 117.5px,#01ffc6 125.5px,#0bffc7 129.5px,#9dffd8 167.5px,#e6ffe2 184.5px,#fbfce2 189.5px,#ffe6d2 195.5px,#ffbab0 208.5px,#ff9191 225.5px,#ff6b75 247.5px,#ff4a5c 276.5px,#ff2c46 314.5px,#ff0b2f 380.5px,#ff0028 409.5px,#ff0016 526.5px,#f01 576.5px,#ff0010 589.5px,#ff0010 590.5px)"></i><i style="top:96px;left:8px;width:591px;height:2px;background:linear-gradient(90deg,#00ffa9 0.5px,#00ffbf 88.5px,#02ffcd 126.5px,#11ffcf 131.5px,#a5ffe1 169.5px,#f0ffeb 186.5px,#fdf9e9 190.5px,#ffc8c2 203.5px,#ffa4a6 216.5px,#ff808a 233.5px,#ff6071 255.5px,#ff425a 284.5px,#ff2645 322.5px,#ff072f 388.5px,#ff002a 410.5px,#ff0017 527.5px,#ff0012 577.5px,#f01 590.5px)"></i><i style="top:98px;left:9px;width:590px;height:2px;background:linear-gradient(90deg,#00ffae 0.5px,#00ffc5 88.5px,#00ffd0 117.5px,#01ffd3 125.5px,#10ffd6 130.5px,#a6ffe9 168.5px,#f0fef4 185.5px,#fdf8f0 189.5px,#ffc7c9 202.5px,#ffa3ab 215.5px,#ff7f8f 232.5px,#ff5f75 254.5px,#ff415d 283.5px,#ff2648 321.5px,#ff0631 387.5px,#ff002c 409.5px,#ff0019 526.5px,#ff0013 576.5px,#ff0012 589.5px)"></i><i style="top:100px;left:9px;width:588px;height:2px;background:linear-gradient(90deg,#00ffb2 0.5px,#00ffcb 88.5px,#00ffd7 117.5px,#01ffda 125.5px,#0bffdc 129.5px,#a1fff1 167.5px,#ebfcfa 184.5px,#fcf6f7 189.5px,#ffd1d8 199.5px,#ffa9b7 212.5px,#ff8498 229.5px,#ff627c 251.5px,#ff4262 280.5px,#ff274c 318.5px,#ff0734 384.5px,#ff002e 406.5px,#ff001a 523.5px,#ff0015 573.5px,#ff0014 586.5px,#ff0013 587.5px)"></i><i style="top:102px;left:10px;width:585px;height:2px;background:linear-gradient(90deg,#00ffb7 0.5px,#00ffd2 88.5px,#00ffde 117.5px,#02ffe2 125.5px,#12ffe4 130.5px,#a9fdf9 168.5px,#eff6fe 185.5px,#fcedf8 190.5px,#ffbfd1 203.5px,#ff9cb2 216.5px,#ff7a95 233.5px,#ff5a7a 255.5px,#ff3d62 284.5px,#ff1c47 334.5px,#ff0032 400.5px,#ff001c 517.5px,#ff0015 583.5px,#ff0015 584.5px)"></i><i style="top:104px;left:11px;width:582px;height:2px;background:linear-gradient(90deg,#00ffbc 0.5px,#00ffd8 88.5px,#00ffe5 117.5px,#03ffe9 125.5px,#34fff0 138.5px,#a6f9fd 167.5px,#e8efff 184.5px,#fbe6fa 190.5px,#ffcbe3 198.5px,#ffa5c1 211.5px,#ff80a0 228.5px,#ff5e83 250.5px,#ff4068 279.5px,#ff2451 317.5px,#ff0538 383.5px,#ff0032 405.5px,#ff001d 522.5px,#ff0017 572.5px,#ff0016 580.5px,#ff0016 581.5px)"></i><i style="top:106px;left:12px;width:579px;height:2px;background:linear-gradient(90deg,#00ffc1 0.5px,#00ffdf 88.5px,#00ffed 117.5px,#01fff0 123.5px,#0bfff2 127.5px,#7cf9fe 156.5px,#e9e5ff 185.5px,#fbddfa 191.5px,#ffc3e4 199.5px,#ff9fc2 212.5px,#ff7ba2 229.5px,#ff5b84 251.5px,#ff3d6a 280.5px,#ff1c4d 330.5px,#ff053a 380.5px,#ff0034 402.5px,#ff001f 519.5px,#ff0019 569.5px,#ff0018 577.5px,#ff0018 578.5px)"></i><i style="top:108px;left:12px;width:577px;height:2px;background:linear-gradient(90deg,#00ffc6 0.5px,#00ffe5 88.5px,#00fff4 117.5px,#01fef7 123.5px,#0afef8 127.5px,#79f2ff 156.5px,#e2deff 185.5px,#fbd4fb 193.5px,#ffb6de 203.5px,#ff8cb7 220.5px,#ff6693 242.5px,#ff4474 271.5px,#ff275a 309.5px,#ff063e 375.5px,#ff0038 397.5px,#ff0021 514.5px,#ff001b 564.5px,#ff0019 574.5px,#ff0019 576.5px)"></i><i style="top:110px;left:13px;width:574px;height:2px;background:linear-gradient(90deg,#00ffcb 0.5px,#00ffe2 66.5px,#00fef9 116.5px,#03fcfc 124.5px,#8ee6ff 162.5px,#f4d1fe 191.5px,#fec7f6 196.5px,#ff98c9 213.5px,#ff76a8 230.5px,#ff578a 252.5px,#ff3a6f 281.5px,#ff1951 331.5px,#ff023e 381.5px,#ff0029 469.5px,#ff001c 557.5px,#ff001b 570.5px,#ff001b 573.5px)"></i><i style="top:112px;left:13px;width:572px;height:2px;background:linear-gradient(90deg,#00ffd0 0.5px,#00ffe8 66.5px,#00fefa 104.5px,#00f8fe 121.5px,#05f6fe 125.5px,#8ddfff 163.5px,#f1caff 192.5px,#febff7 198.5px,#ff92ca 215.5px,#ff72a9 232.5px,#ff538b 254.5px,#ff3770 283.5px,#ff1752 333.5px,#ff013f 383.5px,#ff002a 471.5px,#ff001e 559.5px,#ff001c 569.5px,#ff001c 571.5px)"></i><i style="top:114px;left:14px;width:569px;height:2px;background:linear-gradient(90deg,#00ffd5 0.5px,#00fef9 88.5px,#00f4ff 117.5px,#02f0ff 123.5px,#15edff 129.5px,#9ad5ff 167.5px,#e4c5ff 189.5px,#fbbcfb 197.5px,#ffa2e1 207.5px,#ff7dba 224.5px,#ff5b98 246.5px,#ff3c79 275.5px,#ff215f 313.5px,#ff0142 379.5px,#ff002d 467.5px,#ff001f 555.5px,#ff001e 568.5px)"></i><i style="top:116px;left:14px;width:567px;height:2px;background:linear-gradient(90deg,#00ffda 0.5px,#00fff5 66.5px,#00f9fe 95.5px,#0ef 117.5px,#01eaff 123.5px,#10e7ff 128.5px,#74d5ff 157.5px,#f2baff 195.5px,#feb1f7 201.5px,#ff87cc 218.5px,#ff62a4 240.5px,#ff4182 269.5px,#ff2465 307.5px,#ff0a4c 357.5px,#f04 379.5px,#ff002e 467.5px,#ff0020 555.5px,#ff001f 565.5px,#ff001f 566.5px)"></i><i style="top:118px;left:15px;width:564px;height:2px;background:linear-gradient(90deg,#00ffe0 0.5px,#00fefa 66.5px,#00f3ff 95.5px,#00e7ff 117.5px,#02e3ff 123.5px,#a8c3ff 173.5px,#efb4ff 195.5px,#fdacf9 201.5px,#ff84cf 218.5px,#ff60a7 240.5px,#ff3f85 269.5px,#ff2267 307.5px,#ff094e 357.5px,#ff0046 379.5px,#ff002f 467.5px,#f02 555.5px,#ff0021 563.5px)"></i><i style="top:120px;left:16px;width:561px;height:2px;background:linear-gradient(90deg,#00ffe5 0.5px,#00fef9 50.5px,#00f5ff 79.5px,#00e0ff 117.5px,#04dcff 123.5px,#81c5ff 161.5px,#f8aafe 199.5px,#ff9ef2 205.5px,#ff7ac9 222.5px,#ff58a4 244.5px,#ff3a83 273.5px,#ff1f67 311.5px,#ff054e 361.5px,#ff0046 383.5px,#ff0030 471.5px,#f02 559.5px,#f02 560.5px)"></i><i style="top:122px;left:17px;width:558px;height:2px;background:linear-gradient(90deg,#00ffeb 0.5px,#00fcfd 50.5px,#00daff 116.5px,#03d7ff 122.5px,#a2b8ff 172.5px,#faa2fd 201.5px,#ff91eb 209.5px,#ff70c4 226.5px,#ff51a1 248.5px,#ff3582 277.5px,#ff1b66 315.5px,#ff024e 365.5px,#ff003a 431.5px,#ff0025 548.5px,#ff0024 556.5px,#ff0024 557.5px)"></i><i style="top:124px;left:18px;width:556px;height:2px;background:linear-gradient(90deg,#00fff0 0.5px,#00fcfd 38.5px,#00dbff 104.5px,#02d1ff 121.5px,#9eb2ff 171.5px,#f59efe 200.5px,#fe94f5 206.5px,#ff72cd 223.5px,#ff52a8 245.5px,#ff3587 274.5px,#ff1b6a 312.5px,#ff0251 362.5px,#ff0041 412.5px,#ff0029 529.5px,#ff0025 551.5px,#ff0025 555.5px)"></i><i style="top:126px;left:18px;width:554px;height:2px;background:linear-gradient(90deg,#00fff5 0.5px,#00fbfe 29.5px,#00ceff 117.5px,#04cbff 122.5px,#79b4ff 160.5px,#ea9bff 198.5px,#fa96fd 204.5px,#ff86eb 212.5px,#ff67c6 229.5px,#ff4aa4 251.5px,#ff3085 280.5px,#ff1769 318.5px,#ff0051 368.5px,#ff0037 456.5px,#ff0028 544.5px,#ff0027 552.5px,#ff0026 553.5px)"></i><i style="top:128px;left:19px;width:551px;height:2px;background:linear-gradient(90deg,#00fefa 0.5px,#00f1ff 38.5px,#00d0ff 104.5px,#00c8ff 117.5px,#05c5ff 122.5px,#79afff 160.5px,#e896ff 198.5px,#fc8efc 206.5px,#ff75dd 219.5px,#ff54b5 241.5px,#ff3690 270.5px,#ff1b71 308.5px,#ff0257 358.5px,#ff0040 424.5px,#ff0029 541.5px,#ff0028 549.5px,#ff0028 550.5px)"></i><i style="top:130px;left:20px;width:548px;height:2px;background:linear-gradient(90deg,#00fcfe 0.5px,#00d3ff 88.5px,#00c3ff 117.5px,#07c0ff 122.5px,#5fafff 151.5px,#ee8fff 201.5px,#fc89fc 207.5px,#ff71de 220.5px,#ff51b6 242.5px,#ff3392 271.5px,#ff1973 309.5px,#ff0158 359.5px,#ff0042 425.5px,#ff002a 542.5px,#ff002a 547.5px)"></i><i style="top:132px;left:20px;width:546px;height:2px;background:linear-gradient(90deg,#00f8ff 0.5px,#00beff 117.5px,#06bbff 122.5px,#5caaff 151.5px,#e98aff 201.5px,#fc83fc 209.5px,#ff6cdf 222.5px,#ff4db7 244.5px,#ff3193 273.5px,#ff1774 311.5px,#ff0059 361.5px,#ff0043 427.5px,#ff002b 544.5px,#ff002b 545.5px)"></i><i style="top:134px;left:21px;width:543px;height:2px;background:linear-gradient(90deg,#00f2ff 0.5px,#00b9ff 117.5px,#07b6ff 122.5px,#5da5ff 151.5px,#e686ff 201.5px,#fa7ffd 209.5px,#ff72ed 217.5px,#ff57ca 234.5px,#ff3ea9 256.5px,#ff268a 285.5px,#ff0f6e 323.5px,#ff015f 352.5px,#ff0047 418.5px,#ff002e 535.5px,#ff002d 541.5px,#ff002d 542.5px)"></i><i style="top:136px;left:22px;width:540px;height:2px;background:linear-gradient(90deg,#00edff 0.5px,#00b4ff 117.5px,#09b1ff 122.5px,#5da0ff 151.5px,#e481ff 201.5px,#fc79fc 211.5px,#ff63e0 224.5px,#ff46b9 246.5px,#ff2c95 275.5px,#ff1376 313.5px,#ff0161 351.5px,#ff0048 417.5px,#ff002f 534.5px,#ff002e 539.5px)"></i><i style="top:138px;left:23px;width:537px;height:2px;background:linear-gradient(90deg,#00e8ff 0.5px,#01afff 117.5px,#0bacff 122.5px,#5d9cff 151.5px,#e27dff 201.5px,#fb75fd 211.5px,#ff69ee 219.5px,#ff4ac3 241.5px,#ff2e9d 270.5px,#ff157c 308.5px,#ff0165 346.5px,#ff004b 412.5px,#ff0036 500.5px,#ff0031 529.5px,#ff0030 535.5px,#ff0030 536.5px)"></i><i style="top:140px;left:23px;width:535px;height:2px;background:linear-gradient(90deg,#00e3ff 0.5px,#01abff 117.5px,#0aa8ff 122.5px,#5b98ff 151.5px,#dd79ff 201.5px,#fc6ffc 214.5px,#ff56d9 231.5px,#ff3cb5 253.5px,#ff2494 282.5px,#ff0d76 320.5px,#f06 349.5px,#ff004c 415.5px,#ff0037 503.5px,#ff0032 532.5px,#ff0031 534.5px)"></i><i style="top:142px;left:24px;width:532px;height:2px;background:linear-gradient(90deg,#00dfff 0.5px,#01a6ff 117.5px,#0fa3ff 123.5px,#758dff 161.5px,#f56eff 211.5px,#fe68f9 217.5px,#ff49cd 239.5px,#ff33ad 261.5px,#ff1d8f 290.5px,#ff0873 328.5px,#ff0067 350.5px,#ff004d 416.5px,#ff0038 504.5px,#ff0034 526.5px,#f03 531.5px)"></i><i style="top:144px;left:25px;width:529px;height:2px;background:linear-gradient(90deg,#00daff 0.5px,#02a2ff 117.5px,#8486ff 167.5px,#e36eff 205.5px,#fb67fd 215.5px,#ff5cee 223.5px,#ff40c5 245.5px,#ff26a0 274.5px,#ff0f7f 312.5px,#ff006e 341.5px,#ff0052 407.5px,#ff003b 495.5px,#ff0035 524.5px,#ff0035 528.5px)"></i><i style="top:146px;left:26px;width:526px;height:2px;background:linear-gradient(90deg,#00d5ff 0.5px,#00acff 88.5px,#00a1ff 110.5px,#019eff 116.5px,#159aff 124.5px,#957dff 174.5px,#f266ff 212.5px,#fd60fb 218.5px,#ff43d0 240.5px,#ff2eb0 262.5px,#ff1992 291.5px,#ff0476 329.5px,#ff006d 346.5px,#ff0051 412.5px,#ff003b 500.5px,#ff0037 522.5px,#ff0036 525.5px)"></i><i style="top:148px;left:27px;width:523px;height:2px;background:linear-gradient(90deg,#00d1ff 0.5px,#00a8ff 88.5px,#009dff 110.5px,#029aff 116.5px,#817eff 166.5px,#f95ffe 216.5px,#ff55f1 224.5px,#ff3bc8 246.5px,#ff22a3 275.5px,#ff0b82 313.5px,#ff0074 335.5px,#ff0057 401.5px,#ff003e 489.5px,#ff0039 518.5px,#ff0038 522.5px)"></i><i style="top:150px;left:27px;width:521px;height:2px;background:linear-gradient(90deg,#00cdff 0.5px,#00a5ff 88.5px,#09f 110.5px,#0296ff 116.5px,#7e7bff 166.5px,#f55cff 216.5px,#fe57f9 222.5px,#ff3ccf 244.5px,#ff23a9 273.5px,#ff0b86 311.5px,#ff0078 333.5px,#ff0059 399.5px,#ff0040 487.5px,#ff003a 516.5px,#ff003a 520.5px)"></i><i style="top:152px;left:28px;width:518px;height:2px;background:linear-gradient(90deg,#00c9ff 0.5px,#00a1ff 88.5px,#0096ff 110.5px,#0392ff 116.5px,#7d77ff 166.5px,#f359ff 216.5px,#fd54fb 222.5px,#ff3ad2 244.5px,#ff21ab 273.5px,#ff0a88 311.5px,#ff0079 333.5px,#ff005a 399.5px,#ff0041 487.5px,#ff003b 516.5px,#ff003b 517.5px)"></i><i style="top:154px;left:29px;width:515px;height:2px;background:linear-gradient(90deg,#00c4ff 0.5px,#009dff 88.5px,#0092ff 110.5px,#048fff 116.5px,#617aff 154.5px,#f953fe 220.5px,#ff4af2 228.5px,#ff32cb 250.5px,#ff1ba6 279.5px,#ff0586 317.5px,#ff007b 334.5px,#ff005b 400.5px,#ff0042 488.5px,#ff003e 510.5px,#ff003d 514.5px)"></i><i style="top:156px;left:30px;width:512px;height:2px;background:linear-gradient(90deg,#00c0ff 0.5px,#09f 88.5px,#008eff 110.5px,#058bff 116.5px,#6177ff 154.5px,#f850fe 220.5px,#fe4af8 226.5px,#ff32d0 248.5px,#ff1baa 277.5px,#ff0589 315.5px,#ff007d 332.5px,#ff005e 398.5px,#f04 486.5px,#ff003f 508.5px,#ff003f 511.5px)"></i><i style="top:158px;left:31px;width:510px;height:2px;background:linear-gradient(90deg,#00bcff 0.5px,#0095ff 88.5px,#008aff 110.5px,#0488ff 115.5px,#5f74ff 153.5px,#f44dff 219.5px,#fd48fb 225.5px,#ff31d4 247.5px,#ff1aad 276.5px,#ff048b 314.5px,#ff0080 331.5px,#f06 381.5px,#ff0049 469.5px,#ff0041 507.5px,#ff0040 509.5px)"></i><i style="top:160px;left:32px;width:507px;height:2px;background:linear-gradient(90deg,#00b9ff 0.5px,#0091ff 88.5px,#0087ff 110.5px,#0684ff 115.5px,#5f70ff 153.5px,#f24aff 219.5px,#fe44fa 227.5px,#ff2dd3 249.5px,#ff17ad 278.5px,#ff018c 316.5px,#ff006e 366.5px,#f05 432.5px,#f04 498.5px,#ff0042 506.5px)"></i><i style="top:162px;left:33px;width:504px;height:2px;background:linear-gradient(90deg,#00b5ff 0.5px,#008eff 88.5px,#0083ff 110.5px,#0781ff 115.5px,#606dff 153.5px,#f047ff 219.5px,#fd41fb 227.5px,#ff25ca 256.5px,#ff11a8 285.5px,#ff018f 314.5px,#ff0071 364.5px,#ff0057 430.5px,#ff0045 496.5px,#f04 502.5px,#f04 503.5px)"></i><i style="top:164px;left:34px;width:501px;height:2px;background:linear-gradient(90deg,#00b1ff 0.5px,#008bff 88.5px,#0180ff 110.5px,#0b7dff 116.5px,#6269ff 154.5px,#f044ff 220.5px,#fd3efb 228.5px,#ff23cb 257.5px,#ff0fa9 286.5px,#ff0090 315.5px,#ff0072 365.5px,#ff0058 431.5px,#ff0046 497.5px,#ff0045 500.5px)"></i><i style="top:166px;left:35px;width:498px;height:2px;background:linear-gradient(90deg,#00aeff 0.5px,#0087ff 88.5px,#017dff 110.5px,#1279ff 118.5px,#805fff 168.5px,#ea42ff 218.5px,#fc3bfd 228.5px,#ff21cd 257.5px,#ff0dab 286.5px,#ff0197 308.5px,#f07 358.5px,#ff005b 424.5px,#ff0049 490.5px,#ff0047 496.5px,#ff0047 497.5px)"></i><i style="top:168px;left:36px;width:495px;height:2px;background:linear-gradient(90deg,#0af 0.5px,#0084ff 88.5px,#0279ff 110.5px,#6f60ff 160.5px,#f83aff 226.5px,#ff33f5 234.5px,#ff20d0 256.5px,#ff0cad 285.5px,#f09 307.5px,#ff0079 357.5px,#ff005d 423.5px,#ff004a 489.5px,#ff0049 494.5px)"></i><i style="top:170px;left:37px;width:492px;height:2px;background:linear-gradient(90deg,#00a7ff 0.5px,#0081ff 88.5px,#0276ff 110.5px,#6f5dff 160.5px,#f637ff 226.5px,#ff31f7 234.5px,#ff1ed2 256.5px,#ff0baf 285.5px,#ff009b 307.5px,#ff007a 357.5px,#ff005e 423.5px,#ff004b 489.5px,#ff004b 491.5px)"></i><i style="top:172px;left:38px;width:489px;height:2px;background:linear-gradient(90deg,#00a3ff 0.5px,#007eff 88.5px,#0076ff 105.5px,#0573ff 111.5px,#5860ff 149.5px,#de3cff 215.5px,#f834ff 228.5px,#ff2df5 236.5px,#ff1bd1 258.5px,#ff08af 287.5px,#ff009f 304.5px,#ff007d 354.5px,#ff0060 420.5px,#ff004d 486.5px,#ff004d 488.5px)"></i><i style="top:174px;left:39px;width:486px;height:2px;background:linear-gradient(90deg,#00a0ff 0.5px,#007bff 88.5px,#0073ff 105.5px,#0770ff 111.5px,#595dff 149.5px,#dd39ff 215.5px,#fd2efd 232.5px,#ff17cf 261.5px,#ff04ae 290.5px,#ff009e 307.5px,#ff007d 357.5px,#ff0061 423.5px,#ff0051 473.5px,#ff004f 483.5px,#ff004e 485.5px)"></i><i style="top:176px;left:39px;width:484px;height:2px;background:linear-gradient(90deg,#009dff 0.5px,#0078ff 88.5px,#0070ff 105.5px,#066dff 111.5px,#575bff 149.5px,#d937ff 215.5px,#fa2dfe 232.5px,#ff26f4 240.5px,#ff15d1 262.5px,#ff03b0 291.5px,#ff0090 329.5px,#ff0074 379.5px,#ff005b 445.5px,#ff0050 483.5px)"></i><i style="top:178px;left:40px;width:481px;height:2px;background:linear-gradient(90deg,#009aff 0.5px,#0075ff 88.5px,#006dff 105.5px,#076bff 111.5px,#5758ff 149.5px,#d834ff 215.5px,#f82aff 232.5px,#ff24f6 240.5px,#ff13d3 262.5px,#ff01b1 291.5px,#ff0092 329.5px,#ff0075 379.5px,#ff005c 445.5px,#ff0054 474.5px,#ff0052 480.5px)"></i><i style="top:180px;left:41px;width:478px;height:2px;background:linear-gradient(90deg,#0097ff 0.5px,#0072ff 88.5px,#006bff 105.5px,#0968ff 111.5px,#5755ff 149.5px,#d632ff 215.5px,#f728ff 232.5px,#ff22f8 240.5px,#ff0dcc 269.5px,#ff00b3 291.5px,#ff0093 329.5px,#f07 379.5px,#ff005d 445.5px,#f05 474.5px,#ff0054 477.5px)"></i><i style="top:182px;left:42px;width:475px;height:2px;background:linear-gradient(90deg,#0094ff 0.5px,#0070ff 88.5px,#0168ff 105.5px,#0a65ff 111.5px,#5853ff 149.5px,#fd22fd 237.5px,#ff0dd1 266.5px,#ff00b8 288.5px,#ff0097 326.5px,#ff007a 376.5px,#ff005f 442.5px,#ff0057 471.5px,#ff0056 474.5px)"></i><i style="top:184px;left:43px;width:472px;height:2px;background:linear-gradient(90deg,#0091ff 0.5px,#006dff 88.5px,#0165ff 105.5px,#8145ff 171.5px,#fc20fe 237.5px,#ff16ea 250.5px,#ff03c3 279.5px,#ff00a7 308.5px,#ff0084 358.5px,#ff0067 424.5px,#ff005a 462.5px,#ff0058 470.5px,#ff0058 471.5px)"></i><i style="top:186px;left:44px;width:469px;height:2px;background:linear-gradient(90deg,#008eff 0.5px,#006aff 88.5px,#0163ff 105.5px,#634bff 155.5px,#dd28ff 221.5px,#fc1dfe 238.5px,#ff14eb 251.5px,#ff01c4 280.5px,#ff00a0 318.5px,#ff0080 368.5px,#ff0064 434.5px,#ff005b 463.5px,#ff005a 468.5px)"></i><i style="top:188px;left:45px;width:466px;height:2px;background:linear-gradient(90deg,#008cff 0.5px,#0068ff 88.5px,#0260ff 105.5px,#6348ff 155.5px,#dc25ff 221.5px,#fa1bfe 238.5px,#ff14f1 248.5px,#ff01c9 277.5px,#ff00a4 315.5px,#ff0083 365.5px,#ff0067 431.5px,#ff005d 460.5px,#ff005c 465.5px)"></i><i style="top:190px;left:46px;width:463px;height:2px;background:linear-gradient(90deg,#0089ff 0.5px,#0065ff 88.5px,#005fff 101.5px,#075dff 107.5px,#514bff 145.5px,#f01cff 233.5px,#fe16fb 243.5px,#ff02d1 272.5px,#f0a 310.5px,#ff0087 360.5px,#ff006a 426.5px,#ff0060 455.5px,#ff005e 461.5px,#ff005e 462.5px)"></i><i style="top:192px;left:47px;width:461px;height:2px;background:linear-gradient(90deg,#0086ff 0.5px,#0063ff 88.5px,#005dff 101.5px,#085aff 107.5px,#5249ff 145.5px,#ef1aff 233.5px,#fe14fc 243.5px,#ff01d2 272.5px,#ff00ab 310.5px,#ff0089 360.5px,#ff006b 426.5px,#ff0061 455.5px,#ff005f 460.5px)"></i><i style="top:194px;left:48px;width:458px;height:2px;background:linear-gradient(90deg,#0084ff 0.5px,#0060ff 88.5px,#005aff 101.5px,#0e57ff 109.5px,#6b40ff 159.5px,#df1dff 225.5px,#fc12fe 242.5px,#ff09ec 255.5px,#ff00d4 272.5px,#ff00ad 310.5px,#ff008a 360.5px,#ff006c 426.5px,#ff0062 455.5px,#ff0061 457.5px)"></i><i style="top:196px;left:49px;width:455px;height:2px;background:linear-gradient(90deg,#0081ff 0.5px,#005eff 88.5px,#0158ff 101.5px,#7939ff 167.5px,#eb16ff 233.5px,#fc10fe 243.5px,#ff07ec 256.5px,#ff00da 269.5px,#ff00b1 307.5px,#ff008d 357.5px,#ff006e 423.5px,#ff0064 452.5px,#ff0064 454.5px)"></i><i style="top:198px;left:50px;width:452px;height:2px;background:linear-gradient(90deg,#007eff 0.5px,#005bff 88.5px,#0156ff 101.5px,#5d3fff 151.5px,#f410ff 239.5px,#fe0bfb 247.5px,#ff00e2 264.5px,#ff00c0 293.5px,#ff009f 331.5px,#ff0082 381.5px,#ff0067 447.5px,#f06 451.5px)"></i><i style="top:200px;left:51px;width:449px;height:2px;background:linear-gradient(90deg,#007cff 0.5px,#0059ff 88.5px,#0253ff 101.5px,#5d3dff 151.5px,#f30eff 239.5px,#fe09fc 247.5px,#ff00e4 264.5px,#ff00c1 293.5px,#ff00a1 331.5px,#ff0083 381.5px,#ff0068 447.5px,#ff0068 448.5px)"></i><i style="top:202px;left:52px;width:446px;height:2px;background:linear-gradient(90deg,#007aff 0.5px,#0057ff 88.5px,#0351ff 101.5px,#5d3bff 151.5px,#f10cff 239.5px,#fe06fb 249.5px,#ff00e8 262.5px,#ff00c5 291.5px,#ff00a4 329.5px,#ff0085 379.5px,#ff006a 445.5px)"></i><i style="top:204px;left:53px;width:443px;height:2px;background:linear-gradient(90deg,#07f 0.5px,#05f 88.5px,#0150ff 98.5px,#7332ff 164.5px,#e110ff 230.5px,#fc05fe 247.5px,#ff00ed 260.5px,#ff00c9 289.5px,#ff00a7 327.5px,#f08 377.5px,#ff0071 427.5px,#ff006d 440.5px,#ff006c 442.5px)"></i><i style="top:206px;left:54px;width:440px;height:2px;background:linear-gradient(90deg,#0075ff 0.5px,#0052ff 88.5px,#014eff 98.5px,#7330ff 164.5px,#df0eff 230.5px,#fb03fe 247.5px,#ff00f3 257.5px,#ff00cd 286.5px,#f0a 324.5px,#ff008a 374.5px,#ff0074 424.5px,#ff006f 437.5px,#ff006e 439.5px)"></i><i style="top:208px;left:55px;width:437px;height:2px;background:linear-gradient(90deg,#0073ff 0.5px,#0050ff 88.5px,#024cff 98.5px,#5936ff 148.5px,#e808ff 236.5px,#fc00fe 249.5px,#ff00e7 266.5px,#ff00c6 295.5px,#ff00a5 333.5px,#ff0087 383.5px,#ff0071 433.5px,#ff0070 436.5px)"></i><i style="top:210px;left:56px;width:434px;height:2px;background:linear-gradient(90deg,#0070ff 0.5px,#004eff 88.5px,#034aff 98.5px,#5934ff 148.5px,#e606ff 236.5px,#fb00fe 249.5px,#ff00f3 259.5px,#ff00ce 288.5px,#ff00ac 326.5px,#ff008c 376.5px,#ff0075 426.5px,#ff0073 432.5px,#ff0073 433.5px)"></i><i style="top:212px;left:57px;width:431px;height:2px;background:linear-gradient(90deg,#006eff 0.5px,#004cff 88.5px,#0348ff 98.5px,#5932ff 148.5px,#e504ff 236.5px,#fe00fd 253.5px,#ff00cd 291.5px,#ff00ab 329.5px,#ff008c 379.5px,#ff0075 429.5px,#ff0075 430.5px)"></i><i style="top:214px;left:58px;width:428px;height:2px;background:linear-gradient(90deg,#006cff 0.5px,#004aff 88.5px,#0247ff 96.5px,#5631ff 146.5px,#e103ff 234.5px,#fb00fe 251.5px,#ff00f3 261.5px,#ff00cf 290.5px,#ff00ad 328.5px,#ff008d 378.5px,#ff007c 416.5px,#f07 426.5px,#f07 427.5px)"></i><i style="top:216px;left:59px;width:425px;height:2px;background:linear-gradient(90deg,#006aff 0.5px,#0048ff 88.5px,#0245ff 96.5px,#562fff 146.5px,#df02ff 234.5px,#fa00ff 251.5px,#ff00f5 261.5px,#ff00d1 290.5px,#ff00ae 328.5px,#ff008f 378.5px,#ff007d 416.5px,#ff0079 424.5px)"></i><i style="top:218px;left:60px;width:422px;height:2px;background:linear-gradient(90deg,#0068ff 0.5px,#0046ff 88.5px,#0343ff 96.5px,#572dff 146.5px,#de00ff 234.5px,#fe00fd 256.5px,#ff00ce 294.5px,#ff00ad 332.5px,#ff008e 382.5px,#ff007c 420.5px,#ff007c 421.5px)"></i><i style="top:220px;left:62px;width:418px;height:2px;background:linear-gradient(90deg,#0065ff 0.5px,#04f 88.5px,#0341ff 94.5px,#552cff 144.5px,#db00ff 232.5px,#fc00fe 254.5px,#ff00e9 271.5px,#ff00c0 309.5px,#ff009b 359.5px,#ff0082 409.5px,#ff007e 417.5px)"></i><i style="top:222px;left:63px;width:415px;height:2px;background:linear-gradient(90deg,#0063ff 0.5px,#0042ff 88.5px,#0440ff 94.5px,#552aff 144.5px,#b90aff 210.5px,#da00ff 232.5px,#fb00fe 254.5px,#ff00f4 264.5px,#ff00d1 293.5px,#ff00af 331.5px,#ff0090 381.5px,#ff0082 410.5px,#ff0080 414.5px)"></i><i style="top:224px;left:64px;width:412px;height:2px;background:linear-gradient(90deg,#0061ff 0.5px,#0040ff 88.5px,#053eff 94.5px,#5629ff 144.5px,#b808ff 210.5px,#d200ff 227.5px,#fc00fe 256.5px,#ff00e9 273.5px,#ff00c1 311.5px,#ff009d 361.5px,#ff0083 411.5px)"></i><i style="top:226px;left:65px;width:410px;height:2px;background:linear-gradient(90deg,#005fff 0.5px,#003eff 88.5px,#063cff 94.5px,#5627ff 144.5px,#b706ff 210.5px,#d100ff 227.5px,#fb00fe 256.5px,#ff00f4 266.5px,#ff00d2 295.5px,#ff00b1 333.5px,#ff0091 383.5px,#ff0087 405.5px,#ff0085 409.5px)"></i><i style="top:228px;left:66px;width:407px;height:2px;background:linear-gradient(90deg,#005dff 0.5px,#003dff 88.5px,#0b39ff 96.5px,#711dff 162.5px,#ba03ff 212.5px,#da00ff 234.5px,#fa00ff 256.5px,#ff00f6 266.5px,#ff00ca 304.5px,#ff00a3 354.5px,#f08 404.5px,#ff0087 406.5px)"></i><i style="top:230px;left:67px;width:404px;height:2px;background:linear-gradient(90deg,#005bff 0.5px,#003bff 88.5px,#8515ff 176.5px,#bc01ff 214.5px,#f300ff 252.5px,#fe00fc 262.5px,#ff00cf 300.5px,#ff00af 338.5px,#ff0091 388.5px,#ff008b 401.5px,#ff008a 403.5px)"></i><i style="top:232px;left:68px;width:401px;height:2px;background:linear-gradient(90deg,#0059ff 0.5px,#0139ff 88.5px,#651dff 154.5px,#ad05ff 204.5px,#c500ff 221.5px,#fb00ff 259.5px,#ff00f0 272.5px,#ff00c7 310.5px,#ff00a2 360.5px,#ff008d 398.5px,#ff008c 400.5px)"></i><i style="top:234px;left:69px;width:398px;height:2px;background:linear-gradient(90deg,#0058ff 0.5px,#0137ff 88.5px,#651cff 154.5px,#ac03ff 204.5px,#d500ff 233.5px,#fd00fe 262.5px,#ff00d2 300.5px,#ff00b2 338.5px,#ff0093 388.5px,#ff008f 396.5px,#ff008f 397.5px)"></i><i style="top:236px;left:70px;width:395px;height:2px;background:linear-gradient(90deg,#0056ff 0.5px,#0236ff 88.5px,#4e21ff 138.5px,#ab01ff 204.5px,#f200ff 254.5px,#fe00fd 264.5px,#ff00d2 302.5px,#f0a 352.5px,#ff0094 390.5px,#ff0092 394.5px)"></i><i style="top:238px;left:71px;width:392px;height:2px;background:linear-gradient(90deg,#0054ff 0.5px,#003cff 66.5px,#0036ff 83.5px,#0434ff 89.5px,#501fff 139.5px,#ac00ff 205.5px,#f200ff 255.5px,#fe00fd 265.5px,#ff00d2 303.5px,#f0a 353.5px,#ff0094 391.5px)"></i><i style="top:240px;left:72px;width:389px;height:2px;background:linear-gradient(90deg,#0052ff 0.5px,#003bff 66.5px,#0034ff 83.5px,#0532ff 89.5px,#501eff 139.5px,#ac00ff 205.5px,#f100ff 255.5px,#fd00fe 265.5px,#ff00d3 303.5px,#ff00ab 353.5px,#ff009a 382.5px,#ff0097 388.5px)"></i><i style="top:242px;left:73px;width:386px;height:2px;background:linear-gradient(90deg,#0050ff 0.5px,#0039ff 66.5px,#03f 83.5px,#0a30ff 91.5px,#6914ff 157.5px,#9d01ff 195.5px,#f800ff 261.5px,#ff00f9 271.5px,#ff00cf 309.5px,#ff00a9 359.5px,#ff009c 381.5px,#ff009a 385.5px)"></i><i style="top:244px;left:74px;width:383px;height:2px;background:linear-gradient(90deg,#004fff 0.5px,#0037ff 66.5px,#0031ff 83.5px,#7c0cff 171.5px,#9a01ff 193.5px,#f400ff 259.5px,#fe00fc 269.5px,#ff00d2 307.5px,#ff00ab 357.5px,#ff009e 379.5px,#ff009c 382.5px)"></i><i style="top:246px;left:76px;width:379px;height:2px;background:linear-gradient(90deg,#004dff 0.5px,#0036ff 66.5px,#012fff 83.5px,#6014ff 149.5px,#9302ff 187.5px,#ec00ff 253.5px,#fc00fe 266.5px,#ff00e6 288.5px,#ff00c2 326.5px,#ff00a0 376.5px,#ff009f 378.5px)"></i><i style="top:248px;left:77px;width:376px;height:2px;background:linear-gradient(90deg,#004bff 0.5px,#0034ff 66.5px,#022eff 83.5px,#4b1aff 133.5px,#8d02ff 183.5px,#e500ff 249.5px,#fb00ff 266.5px,#ff00f2 279.5px,#ff00cb 317.5px,#ff00a7 367.5px,#ff00a2 375.5px)"></i><i style="top:250px;left:79px;width:372px;height:2px;background:linear-gradient(90deg,#0049ff 0.5px,#0032ff 66.5px,#002dff 79.5px,#7908ff 167.5px,#9600ff 189.5px,#ed00ff 255.5px,#fd00fe 268.5px,#ff00d5 306.5px,#ff00ae 356.5px,#ff00a6 369.5px,#ff00a5 371.5px)"></i><i style="top:252px;left:80px;width:369px;height:2px;background:linear-gradient(90deg,#0048ff 0.5px,#0031ff 66.5px,#012cff 79.5px,#5c11ff 145.5px,#8e00ff 183.5px,#e400ff 249.5px,#fe00fc 271.5px,#ff00d3 309.5px,#ff00ad 359.5px,#ff00a8 367.5px,#ff00a8 368.5px)"></i><i style="top:254px;left:81px;width:366px;height:2px;background:linear-gradient(90deg,#0046ff 0.5px,#002fff 66.5px,#012aff 79.5px,#5c10ff 145.5px,#8202ff 174.5px,#f400ff 262.5px,#fe00fc 272.5px,#ff00d4 310.5px,#ff00ae 360.5px,#ff00ab 365.5px)"></i><i style="top:256px;left:82px;width:363px;height:2px;background:linear-gradient(90deg,#04f 0.5px,#002eff 66.5px,#0229ff 79.5px,#4815ff 129.5px,#80f 179.5px,#f900ff 267.5px,#ff00f8 277.5px,#ff00d0 315.5px,#ff00b3 353.5px,#ff00ae 361.5px,#ff00ae 362.5px)"></i><i style="top:258px;left:83px;width:360px;height:2px;background:linear-gradient(90deg,#0043ff 0.5px,#002cff 66.5px,#0227ff 79.5px,#4814ff 129.5px,#7902ff 167.5px,#e900ff 255.5px,#fd00fe 272.5px,#f0c 322.5px,#ff00b6 351.5px,#ff00b1 359.5px)"></i><i style="top:260px;left:84px;width:358px;height:2px;background:linear-gradient(90deg,#0041ff 0.5px,#002bff 66.5px,#0326ff 79.5px,#4812ff 129.5px,#7901ff 167.5px,#e800ff 255.5px,#fc00fe 272.5px,#ff00e0 301.5px,#ff00b7 351.5px,#ff00b3 357.5px)"></i><i style="top:262px;left:85px;width:355px;height:2px;background:linear-gradient(90deg,#0040ff 0.5px,#0029ff 66.5px,#0126ff 76.5px,#590bff 142.5px,#7e00ff 171.5px,#ec00ff 259.5px,#fe00fc 276.5px,#ff00d5 314.5px,#ff00b7 352.5px,#ff00b6 354.5px)"></i><i style="top:264px;left:87px;width:351px;height:2px;background:linear-gradient(90deg,#003eff 0.5px,#0027ff 66.5px,#0224ff 76.5px,#4610ff 126.5px,#7600ff 164.5px,#e300ff 252.5px,#fd00fe 274.5px,#ff00cd 324.5px,#ff00bc 346.5px,#ff00b9 350.5px)"></i><i style="top:266px;left:88px;width:348px;height:2px;background:linear-gradient(90deg,#003dff 0.5px,#0026ff 66.5px,#0322ff 76.5px,#470fff 126.5px,#7600ff 164.5px,#e200ff 252.5px,#fc00fe 274.5px,#ff00e1 303.5px,#ff00c1 341.5px,#ff00bc 347.5px)"></i><i style="top:268px;left:89px;width:345px;height:2px;background:linear-gradient(90deg,#003bff 0.5px,#0025ff 66.5px,#0222ff 74.5px,#5807ff 140.5px,#7300ff 162.5px,#df00ff 250.5px,#f900ff 272.5px,#ff00f8 282.5px,#ff00d2 320.5px,#ff00c1 342.5px,#ff00c0 344.5px)"></i><i style="top:270px;left:90px;width:342px;height:2px;background:linear-gradient(90deg,#003aff 0.5px,#0023ff 66.5px,#0220ff 74.5px,#450dff 124.5px,#6800ff 153.5px,#f600ff 270.5px,#ff00fc 280.5px,#ff00d5 318.5px,#ff00c4 340.5px,#ff00c3 341.5px)"></i><i style="top:272px;left:92px;width:338px;height:2px;background:linear-gradient(90deg,#0038ff 0.5px,#02f 66.5px,#041fff 74.5px,#460bff 124.5px,#6a00ff 153.5px,#f600ff 270.5px,#ff00fc 280.5px,#ff00d6 318.5px,#ff00c8 335.5px,#ff00c6 337.5px)"></i><i style="top:274px;left:93px;width:335px;height:2px;background:linear-gradient(90deg,#0037ff 0.5px,#0020ff 66.5px,#051dff 74.5px,#470aff 124.5px,#6100ff 146.5px,#ec00ff 263.5px,#fe00fd 280.5px,#ff00d7 318.5px,#f0c 331.5px,#ff00ca 334.5px)"></i><i style="top:276px;left:94px;width:332px;height:2px;background:linear-gradient(90deg,#0035ff 0.5px,#001fff 66.5px,#061cff 74.5px,#5a01ff 140.5px,#e400ff 257.5px,#fd00fe 279.5px,#ff00cf 329.5px,#ff00cd 331.5px)"></i><i style="top:278px;left:95px;width:329px;height:2px;background:linear-gradient(90deg,#0034ff 0.5px,#001eff 66.5px,#071bff 74.5px,#5a00ff 140.5px,#e300ff 257.5px,#fd00fe 279.5px,#ff00da 317.5px,#ff00d2 327.5px,#ff00d1 328.5px)"></i><i style="top:280px;left:97px;width:325px;height:2px;background:linear-gradient(90deg,#0032ff 0.5px,#001cff 66.5px,#5202ff 132.5px,#da00ff 249.5px,#fc00ff 278.5px,#ff00ef 295.5px,#ff00d4 324.5px)"></i><i style="top:282px;left:98px;width:322px;height:2px;background:linear-gradient(90deg,#0031ff 0.5px,#011bff 66.5px,#5201ff 132.5px,#d900ff 249.5px,#fb00ff 278.5px,#ff00f4 291.5px,#ff00d9 320.5px,#ff00d8 321.5px)"></i><i style="top:284px;left:99px;width:319px;height:2px;background:linear-gradient(90deg,#0030ff 0.5px,#011aff 66.5px,#5300ff 132.5px,#d800ff 249.5px,#fa00ff 278.5px,#ff00f9 288.5px,#ff00dc 317.5px,#ff00dc 318.5px)"></i><i style="top:286px;left:100px;width:316px;height:2px;background:linear-gradient(90deg,#002eff 0.5px,#0218ff 66.5px,#5300ff 132.5px,#d800ff 249.5px,#f900ff 278.5px,#ff00fa 288.5px,#ff00e4 310.5px,#ff00df 315.5px)"></i><i style="top:288px;left:101px;width:313px;height:2px;background:linear-gradient(90deg,#002dff 0.5px,#001dff 50.5px,#0018ff 63.5px,#5000ff 129.5px,#fe00fd 285.5px,#ff00e8 307.5px,#ff00e3 312.5px)"></i><i style="top:290px;left:103px;width:309px;height:2px;background:linear-gradient(90deg,#002bff 0.5px,#001bff 50.5px,#0117ff 63.5px,#3f03ff 113.5px,#5800ff 135.5px,#da00ff 252.5px,#fb00ff 281.5px,#ff00f5 294.5px,#ff00e8 307.5px,#ff00e7 308.5px)"></i><i style="top:292px;left:104px;width:306px;height:2px;background:linear-gradient(90deg,#002aff 0.5px,#001aff 50.5px,#0215ff 63.5px,#3f02ff 113.5px,#ec00ff 269.5px,#fe00fd 286.5px,#ff00ed 303.5px,#ff00eb 305.5px)"></i><i style="top:294px;left:105px;width:304px;height:2px;background:linear-gradient(90deg,#0029ff 0.5px,#0019ff 50.5px,#0214ff 63.5px,#3f01ff 113.5px,#ec00ff 269.5px,#fd00fe 286.5px,#f0e 303.5px)"></i><i style="top:296px;left:106px;width:301px;height:2px;background:linear-gradient(90deg,#0028ff 0.5px,#0017ff 50.5px,#0313ff 63.5px,#4000ff 113.5px,#eb00ff 269.5px,#fd00fe 286.5px,#ff00f3 299.5px,#ff00f2 300.5px)"></i><i style="top:298px;left:108px;width:297px;height:2px;background:linear-gradient(90deg,#0026ff 0.5px,#0016ff 50.5px,#0212ff 60.5px,#3e00ff 110.5px,#e700ff 266.5px,#fe00fe 288.5px,#ff00f6 296.5px)"></i><i style="top:300px;left:109px;width:294px;height:2px;background:linear-gradient(90deg,#0025ff 0.5px,#0015ff 50.5px,#0211ff 60.5px,#3e00ff 110.5px,#e700ff 266.5px,#fd00fe 288.5px,#ff00fa 293.5px)"></i><i style="top:302px;left:111px;width:290px;height:2px;background:linear-gradient(90deg,#0024ff 0.5px,#0013ff 50.5px,#0210ff 58.5px,#3002ff 96.5px,#d800ff 252.5px,#f700ff 281.5px,#fe00fe 289.5px)"></i><i style="top:304px;left:112px;width:287px;height:2px;background:linear-gradient(90deg,#02f 0.5px,#0012ff 50.5px,#030fff 58.5px,#3001ff 96.5px,#d700ff 252.5px,#f600ff 281.5px,#fb00ff 286.5px)"></i><i style="top:306px;left:113px;width:284px;height:2px;background:linear-gradient(90deg,#0021ff 0.5px,#01f 50.5px,#030eff 58.5px,#3100ff 96.5px,#d600ff 252.5px,#f500ff 281.5px,#f700ff 283.5px)"></i><i style="top:308px;left:115px;width:280px;height:2px;background:linear-gradient(90deg,#0020ff 0.5px,#000fff 50.5px,#050dff 58.5px,#3200ff 96.5px,#d600ff 252.5px,#ed00ff 274.5px,#f300ff 279.5px)"></i><i style="top:310px;left:116px;width:277px;height:2px;background:linear-gradient(90deg,#001fff 0.5px,#000eff 50.5px,#060cff 58.5px,#2900ff 87.5px,#c0f 243.5px,#ea00ff 272.5px,#ef00ff 276.5px)"></i><i style="top:312px;left:117px;width:274px;height:2px;background:linear-gradient(90deg,#001eff 0.5px,#000dff 50.5px,#0a0aff 60.5px,#2b00ff 89.5px,#ce00ff 245.5px,#e400ff 267.5px,#eb00ff 273.5px)"></i><i style="top:314px;left:119px;width:270px;height:2px;background:linear-gradient(90deg,#001cff 0.5px,#010cff 50.5px,#2201ff 79.5px,#c400ff 235.5px,#e100ff 264.5px,#e700ff 269.5px)"></i><i style="top:316px;left:120px;width:267px;height:2px;background:linear-gradient(90deg,#001bff 0.5px,#010bff 50.5px,#20f 79.5px,#c300ff 235.5px,#e100ff 264.5px,#e300ff 266.5px)"></i><i style="top:318px;left:122px;width:263px;height:2px;background:linear-gradient(90deg,#001aff 0.5px,#0209ff 50.5px,#2400ff 79.5px,#c400ff 235.5px,#da00ff 257.5px,#df00ff 262.5px)"></i><i style="top:320px;left:123px;width:260px;height:2px;background:linear-gradient(90deg,#0019ff 0.5px,#000cff 38.5px,#0109ff 48.5px,#20f 77.5px,#c100ff 233.5px,#d700ff 255.5px,#db00ff 259.5px)"></i><i style="top:322px;left:125px;width:256px;height:2px;background:linear-gradient(90deg,#0017ff 0.5px,#000bff 38.5px,#0307ff 48.5px,#1c00ff 70.5px,#ba00ff 226.5px,#d700ff 255.5px)"></i><i style="top:324px;left:126px;width:253px;height:2px;background:linear-gradient(90deg,#0016ff 0.5px,#000aff 38.5px,#0306ff 48.5px,#1d00ff 70.5px,#ba00ff 226.5px,#d000ff 248.5px,#d400ff 252.5px)"></i><i style="top:326px;left:127px;width:250px;height:2px;background:linear-gradient(90deg,#0015ff 0.5px,#0009ff 38.5px,#0405ff 48.5px,#1e00ff 70.5px,#b900ff 226.5px,#cf00ff 248.5px,#d000ff 249.5px)"></i><i style="top:328px;left:129px;width:246px;height:2px;background:linear-gradient(90deg,#0014ff 0.5px,#0007ff 38.5px,#0404ff 46.5px,#1d00ff 68.5px,#b800ff 224.5px,#c800ff 241.5px,#c0f 245.5px)"></i><i style="top:330px;left:130px;width:244px;height:2px;background:linear-gradient(90deg,#0013ff 0.5px,#0006ff 38.5px,#0403ff 46.5px,#2500ff 75.5px,#be00ff 231.5px,#c800ff 241.5px,#ca00ff 243.5px)"></i><i style="top:332px;left:131px;width:241px;height:2px;background:linear-gradient(90deg,#0012ff 0.5px,#0005ff 38.5px,#0502ff 46.5px,#4b00ff 112.5px,#bc00ff 229.5px,#c500ff 239.5px,#c600ff 240.5px)"></i><i style="top:334px;left:133px;width:237px;height:2px;background:linear-gradient(90deg,#0010ff 0.5px,#0003ff 38.5px,#1700ff 60.5px,#b000ff 216.5px,#c000ff 233.5px,#c300ff 236.5px)"></i><i style="top:336px;left:134px;width:234px;height:2px;background:linear-gradient(90deg,#000fff 0.5px,#0002ff 38.5px,#5a00ff 126.5px,#ad00ff 214.5px,#bd00ff 231.5px,#bf00ff 233.5px)"></i><i style="top:338px;left:136px;width:230px;height:2px;background:linear-gradient(90deg,#000eff 0.5px,#0101ff 38.5px,#4600ff 104.5px,#b400ff 221.5px,#bc00ff 229.5px)"></i><i style="top:340px;left:137px;width:227px;height:2px;background:linear-gradient(90deg,#000dff 0.5px,#0200ff 38.5px,#4600ff 104.5px,#b400ff 221.5px,#b900ff 226.5px)"></i><i style="top:342px;left:139px;width:223px;height:2px;background:linear-gradient(90deg,#000cff 0.5px,#0002ff 29.5px,#0400ff 39.5px,#4800ff 105.5px,#b500ff 222.5px)"></i><i style="top:344px;left:140px;width:220px;height:2px;background:linear-gradient(90deg,#000bff 0.5px,#0001ff 29.5px,#0300ff 37.5px,#4600ff 103.5px,#9800ff 191.5px,#ad00ff 213.5px,#b200ff 219.5px)"></i><i style="top:346px;left:142px;width:216px;height:2px;background:linear-gradient(90deg,#0009ff 0.5px,#00f 29.5px,#0500ff 37.5px,#4700ff 103.5px,#90f 191.5px,#ad00ff 213.5px,#af00ff 215.5px)"></i><i style="top:348px;left:144px;width:212px;height:2px;background:linear-gradient(90deg,#0008ff 0.5px,#00f 29.5px,#1600ff 51.5px,#a800ff 207.5px,#ac00ff 211.5px)"></i><i style="top:350px;left:145px;width:209px;height:2px;background:linear-gradient(90deg,#0007ff 0.5px,#00f 29.5px,#5600ff 117.5px,#a600ff 205.5px,#a900ff 208.5px)"></i><i style="top:352px;left:147px;width:205px;height:2px;background:linear-gradient(90deg,#0005ff 0.5px,#00f 22.5px,#0400ff 32.5px,#4500ff 98.5px,#9500ff 186.5px,#a500ff 203.5px,#a600ff 204.5px)"></i><i style="top:354px;left:149px;width:201px;height:2px;background:linear-gradient(90deg,#0004ff 0.5px,#00f 22.5px,#0300ff 30.5px,#4500ff 96.5px,#9400ff 184.5px,#a000ff 197.5px,#a300ff 200.5px)"></i><i style="top:356px;left:150px;width:198px;height:2px;background:linear-gradient(90deg,#0003ff 0.5px,#00f 22.5px,#0400ff 30.5px,#4500ff 96.5px,#9400ff 184.5px,#a000ff 197.5px)"></i><i style="top:358px;left:152px;width:194px;height:2px;background:linear-gradient(90deg,#0002ff 0.5px,#00f 22.5px,#0800ff 32.5px,#5c00ff 120.5px,#9600ff 186.5px,#9c00ff 192.5px,#9d00ff 193.5px)"></i><i style="top:360px;left:154px;width:190px;height:2px;background:linear-gradient(90deg,#00f 0.5px,#00f 22.5px,#5400ff 110.5px,#8e00ff 176.5px,#9a00ff 189.5px)"></i><i style="top:362px;left:155px;width:187px;height:2px;background:linear-gradient(90deg,#00f 0.5px,#0100ff 22.5px,#5400ff 110.5px,#8e00ff 176.5px,#9700ff 186.5px)"></i><i style="top:364px;left:157px;width:184px;height:2px;background:linear-gradient(90deg,#00f 0.5px,#0200ff 22.5px,#4100ff 88.5px,#8f00ff 176.5px,#9400ff 182.5px,#9500ff 183.5px)"></i><i style="top:366px;left:158px;width:181px;height:2px;background:linear-gradient(90deg,#00f 0.5px,#0200ff 22.5px,#4200ff 88.5px,#8e00ff 176.5px,#9200ff 180.5px)"></i><i style="top:368px;left:160px;width:177px;height:2px;background:linear-gradient(90deg,#00f 0.5px,#00f 17.5px,#5200ff 105.5px,#8b00ff 171.5px,#8f00ff 176.5px)"></i><i style="top:370px;left:161px;width:174px;height:2px;background:linear-gradient(90deg,#00f 0.5px,#00f 17.5px,#5200ff 105.5px,#8b00ff 171.5px,#8c00ff 173.5px)"></i><i style="top:372px;left:163px;width:170px;height:2px;background:linear-gradient(90deg,#00f 0.5px,#0100ff 17.5px,#4000ff 83.5px,#7900ff 149.5px,#8700ff 166.5px,#8a00ff 169.5px)"></i><i style="top:374px;left:165px;width:166px;height:2px;background:linear-gradient(90deg,#00f 0.5px,#0300ff 17.5px,#4100ff 83.5px,#7900ff 149.5px,#8400ff 162.5px,#8700ff 165.5px)"></i><i style="top:376px;left:167px;width:162px;height:2px;background:linear-gradient(90deg,#00f 0.5px,#0100ff 13.5px,#5100ff 101.5px,#7c00ff 151.5px,#8400ff 161.5px)"></i><i style="top:378px;left:169px;width:158px;height:2px;background:linear-gradient(90deg,#00f 0.5px,#0200ff 13.5px,#4000ff 79.5px,#7800ff 145.5px,#8000ff 155.5px,#8200ff 157.5px)"></i><i style="top:380px;left:171px;width:154px;height:2px;background:linear-gradient(90deg,#00f 0.5px,#0100ff 10.5px,#3e00ff 76.5px,#7600ff 142.5px,#7e00ff 152.5px,#7f00ff 153.5px)"></i><i style="top:382px;left:173px;width:150px;height:2px;background:linear-gradient(90deg,#00f 0.5px,#0200ff 10.5px,#3f00ff 76.5px,#70f 142.5px,#7c00ff 148.5px,#7c00ff 149.5px)"></i><i style="top:384px;left:175px;width:146px;height:2px;background:linear-gradient(90deg,#00f 0.5px,#0400ff 10.5px,#4000ff 76.5px,#70f 142.5px,#7a00ff 145.5px)"></i><i style="top:386px;left:177px;width:142px;height:2px;background:linear-gradient(90deg,#00f 0.5px,#0600ff 10.5px,#5400ff 98.5px,#7300ff 136.5px,#70f 141.5px)"></i><i style="top:388px;left:179px;width:138px;height:2px;background:linear-gradient(90deg,#00f 0.5px,#0f00ff 17.5px,#7200ff 134.5px,#7500ff 137.5px)"></i><i style="top:390px;left:180px;width:135px;height:2px;background:linear-gradient(90deg,#00f 0.5px,#6400ff 117.5px,#7200ff 134.5px)"></i><i style="top:392px;left:182px;width:131px;height:2px;background:linear-gradient(90deg,#0100ff 0.5px,#4e00ff 88.5px,#6d00ff 126.5px,#7000ff 130.5px)"></i><i style="top:394px;left:185px;width:126px;height:2px;background:linear-gradient(90deg,#0200ff 0.5px,#3d00ff 66.5px,#60f 116.5px,#6d00ff 124.5px,#6d00ff 125.5px)"></i><i style="top:396px;left:187px;width:122px;height:2px;background:linear-gradient(90deg,#0400ff 0.5px,#5000ff 88.5px,#6800ff 117.5px,#6b00ff 121.5px)"></i><i style="top:398px;left:189px;width:119px;height:2px;background:linear-gradient(90deg,#0600ff 0.5px,#5100ff 88.5px,#6900ff 117.5px,#6900ff 118.5px)"></i><i style="top:400px;left:191px;width:115px;height:2px;background:linear-gradient(90deg,#0700ff 0.5px,#5200ff 88.5px,#6400ff 110.5px,#6700ff 114.5px)"></i><i style="top:402px;left:193px;width:111px;height:2px;background:linear-gradient(90deg,#0900ff 0.5px,#5300ff 88.5px,#6500ff 110.5px)"></i><i style="top:404px;left:196px;width:106px;height:2px;background:linear-gradient(90deg,#0c00ff 0.5px,#50f 88.5px,#6200ff 105.5px)"></i><i style="top:406px;left:198px;width:102px;height:2px;background:linear-gradient(90deg,#0d00ff 0.5px,#5600ff 88.5px,#6000ff 101.5px)"></i><i style="top:408px;left:200px;width:98px;height:2px;background:linear-gradient(90deg,#0f00ff 0.5px,#5700ff 88.5px,#5d00ff 96.5px,#5e00ff 97.5px)"></i><i style="top:410px;left:203px;width:93px;height:2px;background:linear-gradient(90deg,#10f 0.5px,#5800ff 88.5px,#5c00ff 92.5px)"></i><i style="top:412px;left:206px;width:88px;height:2px;background:linear-gradient(90deg,#1300ff 0.5px,#4900ff 66.5px,#5600ff 83.5px,#5900ff 87.5px)"></i><i style="top:414px;left:207px;width:85px;height:2px;background:linear-gradient(90deg,#1400ff 0.5px,#4900ff 66.5px,#5600ff 83.5px,#5700ff 84.5px)"></i><i style="top:416px;left:210px;width:80px;height:2px;background:linear-gradient(90deg,#1600ff 0.5px,#4b00ff 66.5px,#50f 79.5px)"></i><i style="top:418px;left:212px;width:76px;height:2px;background:linear-gradient(90deg,#1700ff 0.5px,#4c00ff 66.5px,#5200ff 74.5px,#5300ff 75.5px)"></i><i style="top:420px;left:215px;width:71px;height:2px;background:linear-gradient(90deg,#1900ff 0.5px,#4d00ff 66.5px,#5100ff 70.5px)"></i><i style="top:422px;left:218px;width:66px;height:2px;background:linear-gradient(90deg,#1b00ff 0.5px,#4300ff 50.5px,#4d00ff 63.5px,#4e00ff 65.5px)"></i><i style="top:424px;left:220px;width:62px;height:2px;background:linear-gradient(90deg,#1d00ff 0.5px,#40f 50.5px,#4c00ff 60.5px,#4c00ff 61.5px)"></i><i style="top:426px;left:222px;width:58px;height:2px;background:linear-gradient(90deg,#1e00ff 0.5px,#4500ff 50.5px,#4900ff 56.5px,#4a00ff 57.5px)"></i><i style="top:428px;left:225px;width:53px;height:2px;background:linear-gradient(90deg,#2000ff 0.5px,#4700ff 50.5px,#4800ff 52.5px)"></i><i style="top:430px;left:227px;width:49px;height:2px;background:linear-gradient(90deg,#2100ff 0.5px,#3f00ff 38.5px,#4600ff 48.5px)"></i><i style="top:432px;left:229px;width:46px;height:2px;background:linear-gradient(90deg,#20f 0.5px,#3f00ff 38.5px,#40f 44.5px,#4500ff 45.5px)"></i><i style="top:434px;left:232px;width:41px;height:2px;background:linear-gradient(90deg,#2400ff 0.5px,#4100ff 38.5px,#4300ff 40.5px)"></i><i style="top:436px;left:234px;width:37px;height:2px;background:linear-gradient(90deg,#2500ff 0.5px,#3b00ff 29.5px,#4000ff 35.5px,#4100ff 36.5px)"></i><i style="top:438px;left:237px;width:32px;height:2px;background:linear-gradient(90deg,#2700ff 0.5px,#3d00ff 29.5px,#3f00ff 31.5px)"></i><i style="top:440px;left:239px;width:28px;height:2px;background:linear-gradient(90deg,#2800ff 0.5px,#3900ff 22.5px,#3d00ff 27.5px)"></i><i style="top:442px;left:241px;width:24px;height:2px;background:linear-gradient(90deg,#2a00ff 0.5px,#3a00ff 22.5px,#3b00ff 23.5px)"></i><i style="top:444px;left:244px;width:19px;height:2px;background:linear-gradient(90deg,#2b00ff 0.5px,#3800ff 17.5px,#3900ff 18.5px)"></i><i style="top:446px;left:246px;width:15px;height:2px;background:linear-gradient(90deg,#2c00ff 0.5px,#3600ff 13.5px,#3700ff 14.5px)"></i><i style="top:448px;left:249px;width:10px;height:2px;background:linear-gradient(90deg,#2e00ff 0.5px,#3400ff 8.5px,#3500ff 9.5px)"></i>
<svg class="a" style="left:0;top:0" width="599" height="461"><defs><filter id="bl" x="-5%" y="-5%" width="110%" height="110%"><feGaussianBlur stdDeviation="1.1"/></filter></defs><path d="M-20 -20H619V481H-20ZM449.9 58.9L124.5 28.4L174.9 339.9Z" fill="#000" fill-opacity="0.40" fill-rule="evenodd" filter="url(#bl)"/></svg>
</div>
<svg class="a" style="left:911px;top:30px" width="646" height="522" viewBox="911 30 646 522" ><path d="M952.6 57.6H1552.3V519.3" stroke="#b4b4b4" stroke-width="1.1" fill="none"/><path d="M952.6 57.6V524.5M947.5 519.4H1552.3" stroke="#c4c4c4" stroke-width="1.1" fill="none"/><path d="M947.5 519.6H952.6M952.6 519.4V524.5M947.5 481.7H952.6M1002.5 519.4V524.5M947.5 443.3H952.6M1052.5 519.4V524.5M947.5 404.8H952.6M1102.4 519.4V524.5M947.5 366.3H952.6M1152.3 519.4V524.5M947.5 327.9H952.6M1202.3 519.4V524.5M947.5 289.4H952.6M1252.2 519.4V524.5M947.5 250.9H952.6M1302.1 519.4V524.5M947.5 212.4H952.6M1352.1 519.4V524.5M947.5 174.0H952.6M1402.0 519.4V524.5M947.5 135.5H952.6M1452.0 519.4V524.5M947.5 97.0H952.6M1501.9 519.4V524.5" stroke="#e4e4e4" stroke-width="1.6" fill="none"/><text x="946.5" y="525.2" font-size="13.20" fill="#dcdcdc" stroke="#dcdcdc" stroke-width=".3" text-anchor="end" >0</text><text x="952.6" y="540.0" font-size="13.20" fill="#dcdcdc" stroke="#dcdcdc" stroke-width=".3" text-anchor="middle" >0</text><text x="946.5" y="486.7" font-size="13.20" fill="#dcdcdc" stroke="#dcdcdc" stroke-width=".3" text-anchor="end" >0,05</text><text x="1002.5" y="540.0" font-size="13.20" fill="#dcdcdc" stroke="#dcdcdc" stroke-width=".3" text-anchor="middle" >0,05</text><text x="946.5" y="448.3" font-size="13.20" fill="#dcdcdc" stroke="#dcdcdc" stroke-width=".3" text-anchor="end" >0,1</text><text x="1052.5" y="540.0" font-size="13.20" fill="#dcdcdc" stroke="#dcdcdc" stroke-width=".3" text-anchor="middle" >0,1</text><text x="946.5" y="409.8" font-size="13.20" fill="#dcdcdc" stroke="#dcdcdc" stroke-width=".3" text-anchor="end" >0,15</text><text x="1102.4" y="540.0" font-size="13.20" fill="#dcdcdc" stroke="#dcdcdc" stroke-width=".3" text-anchor="middle" >0,15</text><text x="946.5" y="371.3" font-size="13.20" fill="#dcdcdc" stroke="#dcdcdc" stroke-width=".3" text-anchor="end" >0,2</text><text x="1152.3" y="540.0" font-size="13.20" fill="#dcdcdc" stroke="#dcdcdc" stroke-width=".3" text-anchor="middle" >0,2</text><text x="946.5" y="332.9" font-size="13.20" fill="#dcdcdc" stroke="#dcdcdc" stroke-width=".3" text-anchor="end" >0,25</text><text x="1202.3" y="540.0" font-size="13.20" fill="#dcdcdc" stroke="#dcdcdc" stroke-width=".3" text-anchor="middle" >0,25</text><text x="946.5" y="294.4" font-size="13.20" fill="#dcdcdc" stroke="#dcdcdc" stroke-width=".3" text-anchor="end" >0,3</text><text x="1252.2" y="540.0" font-size="13.20" fill="#dcdcdc" stroke="#dcdcdc" stroke-width=".3" text-anchor="middle" >0,3</text><text x="946.5" y="255.9" font-size="13.20" fill="#dcdcdc" stroke="#dcdcdc" stroke-width=".3" text-anchor="end" >0,35</text><text x="1302.1" y="540.0" font-size="13.20" fill="#dcdcdc" stroke="#dcdcdc" stroke-width=".3" text-anchor="middle" >0,35</text><text x="946.5" y="217.4" font-size="13.20" fill="#dcdcdc" stroke="#dcdcdc" stroke-width=".3" text-anchor="end" >0,4</text><text x="1352.1" y="540.0" font-size="13.20" fill="#dcdcdc" stroke="#dcdcdc" stroke-width=".3" text-anchor="middle" >0,4</text><text x="946.5" y="179.0" font-size="13.20" fill="#dcdcdc" stroke="#dcdcdc" stroke-width=".3" text-anchor="end" >0,45</text><text x="1402.0" y="540.0" font-size="13.20" fill="#dcdcdc" stroke="#dcdcdc" stroke-width=".3" text-anchor="middle" >0,45</text><text x="946.5" y="140.5" font-size="13.20" fill="#dcdcdc" stroke="#dcdcdc" stroke-width=".3" text-anchor="end" >0,5</text><text x="1452.0" y="540.0" font-size="13.20" fill="#dcdcdc" stroke="#dcdcdc" stroke-width=".3" text-anchor="middle" >0,5</text><text x="946.5" y="102.0" font-size="13.20" fill="#dcdcdc" stroke="#dcdcdc" stroke-width=".3" text-anchor="end" >0,55</text><text x="1501.9" y="540.0" font-size="13.20" fill="#dcdcdc" stroke="#dcdcdc" stroke-width=".3" text-anchor="middle" >0,55</text><g fill="none" stroke="#fff" stroke-width="1.35"><rect x="1188.5" y="144.5" width="13" height="13"/><rect x="1238.4" y="135.4" width="13" height="13"/><rect x="1284.4" y="128.3" width="13" height="13"/><rect x="1335.4" y="119.4" width="13" height="13"/><rect x="1395.5" y="109.5" width="13" height="13"/><rect x="1123.3" y="131.4" width="13" height="13"/><rect x="1107.5" y="116.5" width="13" height="13"/><rect x="1093.0" y="102.5" width="13" height="13"/><rect x="1081.5" y="90.5" width="13" height="13"/><rect x="1070.0" y="79.4" width="13" height="13"/><rect x="1140.4" y="179.5" width="13" height="13"/><rect x="1137.5" y="214.5" width="13" height="13"/><rect x="1133.5" y="256.4" width="13" height="13"/><rect x="1128.5" y="310.5" width="13" height="13"/><rect x="1121.6" y="390.5" width="13" height="13"/><rect x="1131.1" y="153.7" width="13" height="13"/><rect x="1119.1" y="155.6" width="13" height="13"/><rect x="1107.2" y="157.6" width="13" height="13"/><rect x="1095.4" y="159.6" width="13" height="13"/><rect x="1083.8" y="161.5" width="13" height="13"/><rect x="1159.6" y="167.5" width="13" height="13"/><rect x="1177.4" y="185.4" width="13" height="13"/><rect x="1195.5" y="204.4" width="13" height="13"/><rect x="1219.5" y="228.4" width="13" height="13"/><rect x="1250.5" y="257.5" width="13" height="13"/><rect x="1144.8" y="135.4" width="13" height="13"/><rect x="1146.1" y="120.7" width="13" height="13"/><rect x="1147.3" y="108.2" width="13" height="13"/><rect x="1148.3" y="97.6" width="13" height="13"/><rect x="1149.3" y="86.5" width="13" height="13"/></g><rect x="1142.7" y="151.6" width="12.6" height="12.6" fill="none" stroke="#000" stroke-width="1.8"/><g stroke="#000" stroke-width="1.1"><circle cx="1178.5" cy="150.5" r="3.9" fill="#c08787"/><circle cx="1210.6" cy="143.5" r="3.9" fill="#c06565"/><circle cx="1241.4" cy="134.4" r="3.9" fill="#c04a4a"/><circle cx="1279.6" cy="125.2" r="3.9" fill="#c03131"/><circle cx="1328.0" cy="112.4" r="3.9" fill="#c00000"/><circle cx="1141.5" cy="141.8" r="3.9" fill="#99c099"/><circle cx="1132.5" cy="127.4" r="3.9" fill="#7ac07a"/><circle cx="1125.0" cy="113.4" r="3.9" fill="#5ec05e"/><circle cx="1117.5" cy="100.5" r="3.9" fill="#40c040"/><circle cx="1108.5" cy="85.5" r="3.9" fill="#00c000"/><circle cx="1144.5" cy="180.3" r="3.9" fill="#9a9ac0"/><circle cx="1137.5" cy="204.4" r="3.9" fill="#7b7bc0"/><circle cx="1130.5" cy="231.4" r="3.9" fill="#5e5ec0"/><circle cx="1121.5" cy="265.4" r="3.9" fill="#4040c0"/><circle cx="1108.6" cy="311.4" r="3.9" fill="#0000c0"/><circle cx="1141.9" cy="160.5" r="3.9" fill="#a9c0c0"/><circle cx="1135.4" cy="162.5" r="3.9" fill="#91c0c0"/><circle cx="1126.5" cy="164.6" r="3.9" fill="#76c0c0"/><circle cx="1118.3" cy="166.5" r="3.9" fill="#55c0c0"/><circle cx="1108.5" cy="168.4" r="3.9" fill="#00c0c0"/><circle cx="1156.4" cy="169.6" r="3.9" fill="#c0a4c0"/><circle cx="1164.5" cy="182.3" r="3.9" fill="#c089c0"/><circle cx="1171.0" cy="194.4" r="3.9" fill="#c06dc0"/><circle cx="1181.5" cy="210.3" r="3.9" fill="#c04cc0"/><circle cx="1194.0" cy="233.4" r="3.9" fill="#c000c0"/><circle cx="1154.5" cy="144.4" r="3.9" fill="#c0c0a4"/><circle cx="1156.6" cy="131.4" r="3.9" fill="#c0c088"/><circle cx="1160.4" cy="120.6" r="3.9" fill="#c0c06c"/><circle cx="1164.5" cy="107.4" r="3.9" fill="#c0c04e"/><circle cx="1168.7" cy="93.3" r="3.9" fill="#c0c000"/><circle cx="1149.6" cy="162.3" r="3.9" fill="#fff"/></g></svg>
<div class="a" style="left:1345px;top:374px;width:205px;height:140px;background:#3a3a3a"></div>
<div class="a cf" style="left:1349px;top:378px;width:198px;height:133px;overflow:hidden"><i style="top:0px;left:0px;width:198px;height:2px;background:linear-gradient(90deg,#b9ff00 0.5px,#ff0 156.5px,#fe0 194.5px,#ffed00 197.5px)"></i><i style="top:2px;left:0px;width:198px;height:2px;background:linear-gradient(90deg,#b9ff00 0.5px,#fffe00 156.5px,#ffed00 194.5px,#ffec00 197.5px)"></i><i style="top:4px;left:0px;width:198px;height:2px;background:linear-gradient(90deg,#baff00 0.5px,#fffd00 156.5px,#ffed00 194.5px,#ffeb00 197.5px)"></i><i style="top:6px;left:0px;width:198px;height:2px;background:linear-gradient(90deg,#bf0 0.5px,#efff00 117.5px,#fffd00 155.5px,#ffec00 193.5px,#ffeb00 197.5px)"></i><i style="top:8px;left:0px;width:198px;height:2px;background:linear-gradient(90deg,#bf0 0.5px,#f0ff00 117.5px,#feff00 146.5px,#ffea00 196.5px,#ffea00 197.5px)"></i><i style="top:10px;left:0px;width:198px;height:2px;background:linear-gradient(90deg,#bcff00 0.5px,#f1ff00 117.5px,#feff00 146.5px,#ffe900 196.5px,#ffe900 197.5px)"></i><i style="top:12px;left:0px;width:198px;height:2px;background:linear-gradient(90deg,#bdff00 0.5px,#f2ff00 117.5px,#fffe00 146.5px,#ffe900 196.5px,#ffe800 197.5px)"></i><i style="top:14px;left:0px;width:198px;height:2px;background:linear-gradient(90deg,#beff00 0.5px,#f2ff00 117.5px,#fffe00 146.5px,#ffe800 196.5px,#ffe800 197.5px)"></i><i style="top:16px;left:0px;width:198px;height:2px;background:linear-gradient(90deg,#beff00 0.5px,#f3ff00 117.5px,#fffd00 146.5px,#ffe700 196.5px,#ffe700 197.5px)"></i><i style="top:18px;left:0px;width:198px;height:2px;background:linear-gradient(90deg,#bfff01 0.5px,#f4ff00 117.5px,#feff00 139.5px,#ffe900 189.5px,#ffe600 197.5px)"></i><i style="top:20px;left:0px;width:198px;height:2px;background:linear-gradient(90deg,#c0ff02 0.5px,#f5ff00 117.5px,#fffe00 139.5px,#ffe800 189.5px,#ffe500 197.5px)"></i><i style="top:22px;left:0px;width:198px;height:2px;background:linear-gradient(90deg,#c0ff02 0.5px,#f6ff00 117.5px,#fffe00 139.5px,#ffe700 189.5px,#ffe400 197.5px)"></i><i style="top:24px;left:0px;width:198px;height:2px;background:linear-gradient(90deg,#c1ff03 0.5px,#dfff00 66.5px,#feff00 132.5px,#ffea00 182.5px,#ffe400 195.5px,#ffe400 197.5px)"></i><i style="top:26px;left:0px;width:198px;height:2px;background:linear-gradient(90deg,#c2ff04 0.5px,#d8ff00 50.5px,#f7ff00 116.5px,#fffc00 138.5px,#ffe600 188.5px,#ffe300 196.5px,#ffe300 197.5px)"></i><i style="top:28px;left:0px;width:198px;height:2px;background:linear-gradient(90deg,#c3ff04 0.5px,#d9ff00 50.5px,#f8ff00 116.5px,#fffb00 138.5px,#ffe500 188.5px,#ffe200 196.5px,#ffe200 197.5px)"></i><i style="top:30px;left:0px;width:198px;height:2px;background:linear-gradient(90deg,#c3ff05 0.5px,#daff00 50.5px,#f9ff00 116.5px,#fffd00 133.5px,#ffe700 183.5px,#ffe200 196.5px,#ffe100 197.5px)"></i><i style="top:32px;left:0px;width:198px;height:2px;background:linear-gradient(90deg,#c4ff05 0.5px,#dbff00 50.5px,#faff00 116.5px,#fffc00 133.5px,#ffe600 183.5px,#ffe100 196.5px,#ffe000 197.5px)"></i><i style="top:34px;left:0px;width:198px;height:2px;background:linear-gradient(90deg,#c5ff06 0.5px,#dbff00 50.5px,#fbff00 116.5px,#fffb00 133.5px,#ffe500 183.5px,#ffe000 196.5px,#ffe000 197.5px)"></i><i style="top:36px;left:0px;width:198px;height:2px;background:linear-gradient(90deg,#c5ff07 0.5px,#dcff00 50.5px,#fbff00 116.5px,#fff800 138.5px,#ffe200 188.5px,#ffdf00 196.5px,#ffdf00 197.5px)"></i><i style="top:38px;left:0px;width:198px;height:2px;background:linear-gradient(90deg,#c6ff07 0.5px,#df0 50.5px,#fcff00 116.5px,#fff400 145.5px,#ffdf00 195.5px,#ffde00 197.5px)"></i><i style="top:40px;left:0px;width:198px;height:2px;background:linear-gradient(90deg,#c7ff08 0.5px,#e5ff00 66.5px,#fdff00 116.5px,#ffe300 182.5px,#ffde00 195.5px,#fd0 197.5px)"></i><i style="top:42px;left:0px;width:198px;height:2px;background:linear-gradient(90deg,#c8ff08 0.5px,#e6ff00 66.5px,#feff00 116.5px,#ffe200 182.5px,#fd0 195.5px,#fd0 197.5px)"></i><i style="top:44px;left:0px;width:198px;height:2px;background:linear-gradient(90deg,#c8ff09 0.5px,#e7ff00 66.5px,#ff0 116.5px,#ffe200 182.5px,#ffdc00 195.5px,#ffdc00 197.5px)"></i><i style="top:46px;left:0px;width:198px;height:2px;background:linear-gradient(90deg,#c9ff09 0.5px,#e8ff00 66.5px,#fffe00 116.5px,#ffe100 182.5px,#ffdc00 195.5px,#ffdb00 197.5px)"></i><i style="top:48px;left:0px;width:198px;height:2px;background:linear-gradient(90deg,#caff0a 0.5px,#e9ff00 66.5px,#fffd00 116.5px,#ffe000 182.5px,#ffdb00 195.5px,#ffda00 197.5px)"></i><i style="top:50px;left:0px;width:198px;height:2px;background:linear-gradient(90deg,#cbff0b 0.5px,#e9ff00 66.5px,#fcff00 104.5px,#fff700 126.5px,#ffdb00 192.5px,#ffda00 197.5px)"></i><i style="top:52px;left:0px;width:198px;height:2px;background:linear-gradient(90deg,#cbff0b 0.5px,#f5ff00 88.5px,#fffe00 110.5px,#ffe100 176.5px,#ffda00 193.5px,#ffd900 197.5px)"></i><i style="top:54px;left:0px;width:198px;height:2px;background:linear-gradient(90deg,#ccff0c 0.5px,#f6ff00 88.5px,#fffd00 110.5px,#ffe000 176.5px,#ffd900 193.5px,#ffd800 197.5px)"></i><i style="top:56px;left:0px;width:198px;height:2px;background:linear-gradient(90deg,#cdff0c 0.5px,#f7ff00 88.5px,#fffc00 110.5px,#ffdf00 176.5px,#ffd900 193.5px,#ffd700 197.5px)"></i><i style="top:58px;left:0px;width:198px;height:2px;background:linear-gradient(90deg,#ceff0d 0.5px,#f8ff00 88.5px,#fffc00 110.5px,#ffde00 176.5px,#ffd800 193.5px,#ffd700 197.5px)"></i><i style="top:60px;left:0px;width:198px;height:2px;background:linear-gradient(90deg,#cfff0d 0.5px,#f8ff00 88.5px,#fffd00 105.5px,#ffd700 193.5px,#ffd600 197.5px)"></i><i style="top:62px;left:0px;width:198px;height:2px;background:linear-gradient(90deg,#cfff0e 0.5px,#f9ff01 88.5px,#fffc00 105.5px,#ffd600 193.5px,#ffd500 197.5px)"></i><i style="top:64px;left:0px;width:198px;height:2px;background:linear-gradient(90deg,#d0ff0e 0.5px,#faff01 88.5px,#fffb00 105.5px,#ffd600 193.5px,#ffd400 197.5px)"></i><i style="top:66px;left:0px;width:198px;height:2px;background:linear-gradient(90deg,#d1ff0f 0.5px,#fbff02 88.5px,#fffa00 105.5px,#ffd500 193.5px,#ffd400 197.5px)"></i><i style="top:68px;left:0px;width:198px;height:2px;background:linear-gradient(90deg,#d2ff10 0.5px,#fcff03 88.5px,#fff700 110.5px,#ffdb00 176.5px,#ffd400 193.5px,#ffd300 197.5px)"></i><i style="top:70px;left:0px;width:198px;height:2px;background:linear-gradient(90deg,#d2ff10 0.5px,#fdff03 88.5px,#ffe900 138.5px,#ffd500 188.5px,#ffd200 196.5px,#ffd200 197.5px)"></i><i style="top:72px;left:0px;width:198px;height:2px;background:linear-gradient(90deg,#d3ff11 0.5px,#feff04 88.5px,#fe0 126.5px,#ffd300 192.5px,#ffd100 197.5px)"></i><i style="top:74px;left:0px;width:198px;height:2px;background:linear-gradient(90deg,#d4ff11 0.5px,#feff05 88.5px,#ffed00 126.5px,#ffd200 192.5px,#ffd100 197.5px)"></i><i style="top:76px;left:0px;width:198px;height:2px;background:linear-gradient(90deg,#d5ff12 0.5px,#fffe05 88.5px,#ffe700 138.5px,#ffd300 188.5px,#ffd000 196.5px,#ffd000 197.5px)"></i><i style="top:78px;left:0px;width:198px;height:2px;background:linear-gradient(90deg,#d6ff12 0.5px,#fffd06 88.5px,#ffe600 138.5px,#ffd200 188.5px,#ffcf00 196.5px,#ffcf00 197.5px)"></i><i style="top:80px;left:0px;width:198px;height:2px;background:linear-gradient(90deg,#d6ff13 0.5px,#f7ff0a 66.5px,#fffc07 88.5px,#ffe500 138.5px,#ffd100 188.5px,#ffcf00 196.5px,#ffce00 197.5px)"></i><i style="top:82px;left:0px;width:198px;height:2px;background:linear-gradient(90deg,#d7ff14 0.5px,#f7ff0b 66.5px,#fffe08 83.5px,#ffe700 133.5px,#ffd300 183.5px,#ffce00 196.5px,#ffce00 197.5px)"></i><i style="top:84px;left:0px;width:198px;height:2px;background:linear-gradient(90deg,#d8ff14 0.5px,#f8ff0b 66.5px,#fffd09 83.5px,#ffdf00 149.5px,#ffd000 187.5px,#ffcd00 197.5px)"></i><i style="top:86px;left:0px;width:198px;height:2px;background:linear-gradient(90deg,#d9ff15 0.5px,#f9ff0c 66.5px,#fffc09 83.5px,#ffde00 149.5px,#ffd000 187.5px,#fc0 197.5px)"></i><i style="top:88px;left:0px;width:198px;height:2px;background:linear-gradient(90deg,#daff15 0.5px,#faff0c 66.5px,#fffb0a 83.5px,#fd0 149.5px,#ffcf00 187.5px,#ffcb00 197.5px)"></i><i style="top:90px;left:0px;width:198px;height:2px;background:linear-gradient(90deg,#dbff16 0.5px,#fbff0d 66.5px,#fffa0a 83.5px,#fd0 149.5px,#ffce00 187.5px,#ffcb00 197.5px)"></i><i style="top:92px;left:0px;width:198px;height:2px;background:linear-gradient(90deg,#dbff16 0.5px,#fcff0e 66.5px,#fff70a 88.5px,#ffda00 154.5px,#fc0 192.5px,#ffca00 197.5px)"></i><i style="top:94px;left:0px;width:198px;height:2px;background:linear-gradient(90deg,#dcff17 0.5px,#fdff0e 66.5px,#ffd900 154.5px,#ffcb00 192.5px,#ffc900 197.5px)"></i><i style="top:96px;left:0px;width:198px;height:2px;background:linear-gradient(90deg,#ddff18 0.5px,#feff0f 66.5px,#ffd800 154.5px,#ffca00 192.5px,#ffc900 197.5px)"></i><i style="top:98px;left:0px;width:198px;height:2px;background:linear-gradient(90deg,#deff18 0.5px,#feff0f 66.5px,#ffd801 154.5px,#ffc900 192.5px,#ffc800 197.5px)"></i><i style="top:100px;left:0px;width:198px;height:2px;background:linear-gradient(90deg,#dfff19 0.5px,#fffe10 66.5px,#ffd702 154.5px,#ffc900 192.5px,#ffc700 197.5px)"></i><i style="top:102px;left:0px;width:198px;height:2px;background:linear-gradient(90deg,#e0ff19 0.5px,#fffd10 66.5px,#ffd602 154.5px,#ffc800 192.5px,#ffc600 197.5px)"></i><i style="top:104px;left:0px;width:198px;height:2px;background:linear-gradient(90deg,#e1ff1a 0.5px,#f9ff13 50.5px,#fffc11 67.5px,#ffd503 155.5px,#ffc700 193.5px,#ffc600 197.5px)"></i><i style="top:106px;left:0px;width:198px;height:2px;background:linear-gradient(90deg,#e1ff1a 0.5px,#faff14 50.5px,#fffb11 67.5px,#ffd403 155.5px,#ffc600 193.5px,#ffc500 197.5px)"></i><i style="top:108px;left:0px;width:198px;height:2px;background:linear-gradient(90deg,#e2ff1b 0.5px,#fbff15 50.5px,#fffa12 67.5px,#ffd304 155.5px,#ffc500 193.5px,#ffc400 197.5px)"></i><i style="top:110px;left:0px;width:198px;height:2px;background:linear-gradient(90deg,#e3ff1c 0.5px,#fcff15 50.5px,#fff310 79.5px,#ffce03 167.5px,#ffc400 196.5px,#ffc300 197.5px)"></i><i style="top:112px;left:0px;width:198px;height:2px;background:linear-gradient(90deg,#e4ff1c 0.5px,#fdff16 50.5px,#ffcd03 167.5px,#ffc300 196.5px,#ffc300 197.5px)"></i><i style="top:114px;left:0px;width:198px;height:2px;background:linear-gradient(90deg,#e5ff1d 0.5px,#feff16 50.5px,#ffcc04 167.5px,#ffc200 196.5px,#ffc200 197.5px)"></i><i style="top:116px;left:0px;width:198px;height:2px;background:linear-gradient(90deg,#e6ff1d 0.5px,#fffe17 50.5px,#ffd709 138.5px,#ffc401 188.5px,#ffc200 196.5px,#ffc100 197.5px)"></i><i style="top:118px;left:0px;width:198px;height:2px;background:linear-gradient(90deg,#e7ff1e 0.5px,#fffe18 50.5px,#ffd609 138.5px,#ffc402 188.5px,#ffc100 196.5px,#ffc100 197.5px)"></i><i style="top:120px;left:0px;width:198px;height:2px;background:linear-gradient(90deg,#e8ff1f 0.5px,#fffd18 50.5px,#ffd50a 138.5px,#ffc302 188.5px,#ffc001 196.5px,#ffc001 197.5px)"></i><i style="top:122px;left:0px;width:198px;height:2px;background:linear-gradient(90deg,#e8ff1f 0.5px,#fcff1a 38.5px,#fff717 60.5px,#ffd109 148.5px,#ffc303 186.5px,#ffbf02 196.5px,#ffbf02 197.5px)"></i><i style="top:124px;left:0px;width:198px;height:2px;background:linear-gradient(90deg,#e9ff20 0.5px,#fdff1b 38.5px,#ffe912 88.5px,#ffc605 176.5px,#ffc003 193.5px,#ffbf02 197.5px)"></i><i style="top:126px;left:0px;width:198px;height:2px;background:linear-gradient(90deg,#eaff20 0.5px,#feff1c 38.5px,#ffcc09 155.5px,#ffbf03 193.5px,#ffbe03 197.5px)"></i><i style="top:128px;left:0px;width:198px;height:2px;background:linear-gradient(90deg,#ebff21 0.5px,#feff1c 38.5px,#ffcc09 155.5px,#ffbe04 193.5px,#ffbd03 197.5px)"></i><i style="top:130px;left:0px;width:198px;height:2px;background:linear-gradient(90deg,#ecff22 0.5px,#fffe1d 38.5px,#ffd60e 126.5px,#ffbe04 192.5px,#ffbc04 197.5px)"></i><i style="top:132px;left:0px;width:198px;height:1px;background:linear-gradient(90deg,#ecff22 0.5px,#fffe1d 38.5px,#ffd60e 126.5px,#ffbe05 192.5px,#ffbc04 197.5px)"></i>
<svg class="a" style="left:0;top:0" width="198" height="133"><path d="M-380.3 -183.3L979.7 527.4L979.7 -3000Z" fill="#000" fill-opacity="0.40" filter="url(#bl2)"/><defs><filter id="bl2"><feGaussianBlur stdDeviation="0.7"/></filter></defs></svg>
</div>
<div class="a" style="left:1348.0px;top:377.0px;width:199.2px;height:134.6px;box-sizing:border-box;border:1.3px solid #a0a0a0"></div>
<svg class="a" style="left:1349px;top:378px" width="198" height="133" viewBox="1349 378 198 133"><rect x="1439.4" y="437.5" width="13" height="13" fill="none" stroke="#fff" stroke-width="1.35"/><circle cx="1521.5" cy="464.0" r="3.9" fill="#c6c60c" stroke="#000" stroke-width="1.1"/></svg>
<div class="t" style="left:45.0px;top:560.4px;font-size:27.00px;transform:scaleX(1.020);-webkit-text-stroke:.3px;color:#f2f2f2;">Avg dE2000: 6,85</div>
<div class="t" style="left:33.2px;top:598.0px;font-size:27.00px;transform:scaleX(1.038);-webkit-text-stroke:.3px;color:#f2f2f2;">Max dE2000: 16,05</div>
<div class="t" style="left:11.2px;top:643.2px;font-size:27.00px;transform:scaleX(1.037);-webkit-text-stroke:.3px;color:#f2f2f2;">Current Reading</div>
<div class="t" style="left:10.9px;top:680.1px;font-size:22.10px;transform:scaleX(1.062);-webkit-text-stroke:.3px;color:#f2f2f2;">x: 0,4382</div>
<div class="t" style="left:157.2px;top:680.1px;font-size:22.10px;transform:scaleX(1.062);-webkit-text-stroke:.3px;color:#f2f2f2;">y: 0,4977</div>
<div class="t" style="left:10.9px;top:717.9px;font-size:22.10px;transform:scaleX(1.056);-webkit-text-stroke:.3px;color:#f2f2f2;">fL: 33,33</div>
<div class="t" style="left:10.9px;top:750.2px;font-size:22.10px;transform:scaleX(1.124);-webkit-text-stroke:.3px;color:#f2f2f2;">cd/m²: 114,2</div>
<svg class="a" style="left:295px;top:565px" width="290" height="220" viewBox="295 565 290 220" ><defs><linearGradient id="br" x1="0" y1="0" x2="0" y2="1"><stop offset="0" stop-color="#ff5c5c"/><stop offset="1" stop-color="#ff2828"/></linearGradient><linearGradient id="bg" x1="0" y1="0" x2="0" y2="1"><stop offset="0" stop-color="#5cac5c"/><stop offset="1" stop-color="#44a044"/></linearGradient><linearGradient id="bb" x1="0" y1="0" x2="0" y2="1"><stop offset="0" stop-color="#5a5aff"/><stop offset="1" stop-color="#4c4cff"/></linearGradient></defs><rect x="332.8" y="588.8" width="233.6" height="169.1" fill="#262626"/><path d="M332.8 590.2H566.4M332.8 632.1H566.4M332.8 674.1H566.4M332.8 716.0H566.4M332.8 757.9H566.4M332.8 588.7H566.4M332.8 588.7V757.9M566.4 588.7V757.9" stroke="#a0a0a0" stroke-width="1.15" fill="none"/><path d="M326.8 590.2H332.8M326.8 632.1H332.8M326.8 674.1H332.8M326.8 716.0H332.8M326.8 757.9H332.8M332.8 757.9V762.9M566.4 757.9V762.9" stroke="#dcdcdc" stroke-width="1.4" fill="none"/><rect x="355.6" y="675.3" width="61.2" height="82.6" fill="url(#br)" stroke="#000" stroke-width="1.2"/><rect x="416.8" y="726.5" width="62.6" height="31.4" fill="url(#bg)" stroke="#000" stroke-width="1.2"/><rect x="480.0" y="734.4" width="61.8" height="23.5" fill="url(#bb)" stroke="#000" stroke-width="1.2"/><text x="325.5" y="595.2" font-size="13.20" fill="#dcdcdc" stroke="#dcdcdc" stroke-width=".3" text-anchor="end" >110</text><text x="325.5" y="637.1" font-size="13.20" fill="#dcdcdc" stroke="#dcdcdc" stroke-width=".3" text-anchor="end" >105</text><text x="325.5" y="679.1" font-size="13.20" fill="#dcdcdc" stroke="#dcdcdc" stroke-width=".3" text-anchor="end" >100</text><text x="325.5" y="721.0" font-size="13.20" fill="#dcdcdc" stroke="#dcdcdc" stroke-width=".3" text-anchor="end" >95</text><text x="325.5" y="762.9" font-size="13.20" fill="#dcdcdc" stroke="#dcdcdc" stroke-width=".3" text-anchor="end" >90</text><text x="435.0" y="583.5" font-size="13.20" fill="#dcdcdc" stroke="#dcdcdc" stroke-width=".3" text-anchor="middle" textLength="78.0" lengthAdjust="spacingAndGlyphs" >RGB Balance</text><text x="449.6" y="772.6" font-size="13.20" fill="#dcdcdc" stroke="#dcdcdc" stroke-width=".3" text-anchor="middle" textLength="33.0" lengthAdjust="spacingAndGlyphs" >100%</text></svg>
<div class="a" style="left:586.0px;top:559.0px;width:683.5px;height:222px;background:#1a1a1a"></div>
<div class="a" style="left:587.5px;top:560.0px;width:680.5px;height:26.5px;background:linear-gradient(#3c3c3c,#343434 52%,#1e1e1e 53%,#121212)"></div>
<div class="t" style="left:799.6px;top:568.3px;font-size:13.40px;transform:scaleX(1.450);font-weight:bold;color:#f4f4f4;">20%</div>
<div class="t" style="left:899.6px;top:568.3px;font-size:13.40px;transform:scaleX(1.450);font-weight:bold;color:#f4f4f4;">40%</div>
<div class="t" style="left:999.6px;top:568.3px;font-size:13.40px;transform:scaleX(1.450);font-weight:bold;color:#f4f4f4;">60%</div>
<div class="t" style="left:1099.6px;top:568.3px;font-size:13.40px;transform:scaleX(1.450);font-weight:bold;color:#f4f4f4;">80%</div>
<div class="t" style="left:1194.2px;top:568.3px;font-size:13.40px;transform:scaleX(1.450);font-weight:bold;color:#f4f4f4;">100%</div>
<div class="a" style="left:587.5px;top:586.8px;width:680.5px;height:24.2px;background:#474747"></div>
<div class="t" style="left:604.3px;top:592.4px;font-size:14.80px;transform:scaleX(1.363);font-weight:bold;color:#f4f4f4;">x: CIE31</div>
<div class="t" style="left:775.6px;top:592.5px;font-size:14.00px;transform:scaleX(1.495);color:#f4f4f4;">0,3349</div>
<div class="t" style="left:875.6px;top:592.5px;font-size:14.00px;transform:scaleX(1.495);color:#f4f4f4;">0,3563</div>
<div class="t" style="left:975.6px;top:592.5px;font-size:14.00px;transform:scaleX(1.495);color:#f4f4f4;">0,3795</div>
<div class="t" style="left:1075.6px;top:592.5px;font-size:14.00px;transform:scaleX(1.495);color:#f4f4f4;">0,4037</div>
<div class="t" style="left:1175.6px;top:592.5px;font-size:14.00px;transform:scaleX(1.495);color:#f4f4f4;">0,4382</div>
<div class="a" style="left:587.5px;top:611.0px;width:680.5px;height:24.2px;background:#7e7e7e"></div>
<div class="t" style="left:604.3px;top:616.6px;font-size:14.80px;transform:scaleX(1.363);font-weight:bold;color:#f4f4f4;">y: CIE31</div>
<div class="t" style="left:775.6px;top:616.7px;font-size:14.00px;transform:scaleX(1.495);color:#f4f4f4;">0,3582</div>
<div class="t" style="left:875.6px;top:616.7px;font-size:14.00px;transform:scaleX(1.495);color:#f4f4f4;">0,3872</div>
<div class="t" style="left:975.6px;top:616.7px;font-size:14.00px;transform:scaleX(1.495);color:#f4f4f4;">0,4184</div>
<div class="t" style="left:1075.6px;top:616.7px;font-size:14.00px;transform:scaleX(1.495);color:#f4f4f4;">0,4513</div>
<div class="t" style="left:1175.6px;top:616.7px;font-size:14.00px;transform:scaleX(1.495);color:#f4f4f4;">0,4977</div>
<div class="a" style="left:587.5px;top:635.2px;width:680.5px;height:24.2px;background:#474747"></div>
<div class="t" style="left:604.3px;top:640.8px;font-size:14.80px;transform:scaleX(1.216);font-weight:bold;color:#f4f4f4;">Y</div>
<div class="t" style="left:775.6px;top:640.9px;font-size:14.00px;transform:scaleX(1.495);color:#f4f4f4;">140,3398</div>
<div class="t" style="left:875.6px;top:640.9px;font-size:14.00px;transform:scaleX(1.495);color:#f4f4f4;">133,7077</div>
<div class="t" style="left:975.6px;top:640.9px;font-size:14.00px;transform:scaleX(1.495);color:#f4f4f4;">127,9374</div>
<div class="t" style="left:1075.6px;top:640.9px;font-size:14.00px;transform:scaleX(1.495);color:#f4f4f4;">122,9583</div>
<div class="t" style="left:1175.6px;top:640.9px;font-size:14.00px;transform:scaleX(1.495);color:#f4f4f4;">114,1993</div>
<div class="a" style="left:587.5px;top:659.4px;width:680.5px;height:24.2px;background:#7e7e7e"></div>
<div class="t" style="left:604.3px;top:665.0px;font-size:14.80px;transform:scaleX(1.425);font-weight:bold;color:#f4f4f4;">Target x:CIE31</div>
<div class="t" style="left:775.6px;top:665.1px;font-size:14.00px;transform:scaleX(1.495);color:#f4f4f4;">0,3344</div>
<div class="t" style="left:875.6px;top:665.1px;font-size:14.00px;transform:scaleX(1.495);color:#f4f4f4;">0,3564</div>
<div class="t" style="left:975.6px;top:665.1px;font-size:14.00px;transform:scaleX(1.495);color:#f4f4f4;">0,3773</div>
<div class="t" style="left:1075.6px;top:665.1px;font-size:14.00px;transform:scaleX(1.495);color:#f4f4f4;">0,3969</div>
<div class="t" style="left:1175.6px;top:665.1px;font-size:14.00px;transform:scaleX(1.495);color:#f4f4f4;">0,4193</div>
<div class="a" style="left:587.5px;top:683.6px;width:680.5px;height:24.2px;background:#474747"></div>
<div class="t" style="left:604.3px;top:689.2px;font-size:14.80px;transform:scaleX(1.425);font-weight:bold;color:#f4f4f4;">Target y:CIE31</div>
<div class="t" style="left:775.6px;top:689.3px;font-size:14.00px;transform:scaleX(1.495);color:#f4f4f4;">0,3648</div>
<div class="t" style="left:875.6px;top:689.3px;font-size:14.00px;transform:scaleX(1.495);color:#f4f4f4;">0,4013</div>
<div class="t" style="left:975.6px;top:689.3px;font-size:14.00px;transform:scaleX(1.495);color:#f4f4f4;">0,4358</div>
<div class="t" style="left:1075.6px;top:689.3px;font-size:14.00px;transform:scaleX(1.495);color:#f4f4f4;">0,4682</div>
<div class="t" style="left:1175.6px;top:689.3px;font-size:14.00px;transform:scaleX(1.495);color:#f4f4f4;">0,5053</div>
<div class="a" style="left:587.5px;top:707.8px;width:680.5px;height:24.2px;background:#7e7e7e"></div>
<div class="t" style="left:604.3px;top:713.4px;font-size:14.80px;transform:scaleX(1.461);font-weight:bold;color:#f4f4f4;">Target Y</div>
<div class="t" style="left:775.6px;top:713.5px;font-size:14.00px;transform:scaleX(1.495);color:#f4f4f4;">140,9277</div>
<div class="t" style="left:875.6px;top:713.5px;font-size:14.00px;transform:scaleX(1.495);color:#f4f4f4;">138,4540</div>
<div class="t" style="left:975.6px;top:713.5px;font-size:14.00px;transform:scaleX(1.495);color:#f4f4f4;">136,5534</div>
<div class="t" style="left:1075.6px;top:713.5px;font-size:14.00px;transform:scaleX(1.495);color:#f4f4f4;">135,0617</div>
<div class="t" style="left:1175.6px;top:713.5px;font-size:14.00px;transform:scaleX(1.495);color:#f4f4f4;">133,6196</div>
<div class="a" style="left:587.5px;top:732.0px;width:680.5px;height:24.2px;background:#474747"></div>
<div class="t" style="left:604.3px;top:737.6px;font-size:14.80px;transform:scaleX(1.446);font-weight:bold;color:#f4f4f4;">ΔE 2000</div>
<div class="t" style="left:775.6px;top:737.7px;font-size:14.00px;transform:scaleX(1.495);color:#f4f4f4;">3,0921</div>
<div class="t" style="left:875.6px;top:737.7px;font-size:14.00px;transform:scaleX(1.495);color:#f4f4f4;">3,9026</div>
<div class="t" style="left:975.6px;top:737.7px;font-size:14.00px;transform:scaleX(1.495);color:#f4f4f4;">4,2852</div>
<div class="t" style="left:1075.6px;top:737.7px;font-size:14.00px;transform:scaleX(1.495);color:#f4f4f4;">4,6255</div>
<div class="t" style="left:1175.6px;top:737.7px;font-size:14.00px;transform:scaleX(1.495);color:#f4f4f4;">5,5140</div>
<div class="a" style="left:587.5px;top:756.2px;width:680.5px;height:23.4px;background:#7e7e7e"></div>
<div class="t" style="left:604.3px;top:761.8px;font-size:14.80px;transform:scaleX(1.387);font-weight:bold;color:#f4f4f4;">ΔE ITP</div>
<div class="t" style="left:775.6px;top:761.9px;font-size:14.00px;transform:scaleX(1.495);color:#f4f4f4;">3,1873</div>
<div class="t" style="left:875.6px;top:761.9px;font-size:14.00px;transform:scaleX(1.495);color:#f4f4f4;">6,8187</div>
<div class="t" style="left:975.6px;top:761.9px;font-size:14.00px;transform:scaleX(1.495);color:#f4f4f4;">9,6187</div>
<div class="t" style="left:1075.6px;top:761.9px;font-size:14.00px;transform:scaleX(1.495);color:#f4f4f4;">11,4705</div>
<div class="t" style="left:1175.6px;top:761.9px;font-size:14.00px;transform:scaleX(1.495);color:#f4f4f4;">15,1282</div>
<div class="a" style="left:0;top:801.4px;width:1557px;height:60px;background:linear-gradient(#4a4a4a,#3c3c3c 45%,#2a2a2a)"></div>
<div class="a" style="left:0;top:801.8px;width:43px;height:60px;border-radius:4px 4px 0 0;background:linear-gradient(#a6a6a6,#8c8c8c 40%,#5e5e5e)"></div>
<div class="a" style="left:13px;top:803.5px;width:15px;height:15px;border-radius:50%;background:linear-gradient(#7c7c7c,#9a9a9a)"></div>
<div class="a" style="left:16.5px;top:808px;border-left:4px solid transparent;border-right:4px solid transparent;border-bottom:4.5px solid #1a1a1a"></div>
<div class="a" style="left:3.4px;top:828px;width:35px;height:30px;border-radius:3.5px;background:#ffff00;box-shadow:inset 0 0 2px #b0b000"></div>
<div class="a" style="left:49.0px;top:801.8px;width:149.9px;height:60px;border-radius:4px 4px 0 0;background:linear-gradient(#a6a6a6,#8c8c8c 40%,#5e5e5e)"></div>
<div class="a" style="left:54.5px;top:807.2px;width:138.9px;height:36px;border-radius:3.5px;background:#c0c0a2;box-shadow:inset 0 1px 2px rgba(0,0,0,.35)"></div>
<div class="t" style="left:113.4px;top:848.8px;font-size:10.60px;color:#1e1e1e;">20%</div>
<div class="a" style="left:201.0px;top:801.8px;width:149.9px;height:60px;border-radius:4px 4px 0 0;background:linear-gradient(#a6a6a6,#8c8c8c 40%,#5e5e5e)"></div>
<div class="a" style="left:206.5px;top:807.2px;width:138.9px;height:36px;border-radius:3.5px;background:#c0c086;box-shadow:inset 0 1px 2px rgba(0,0,0,.35)"></div>
<div class="t" style="left:265.4px;top:848.8px;font-size:10.60px;color:#1e1e1e;">40%</div>
<div class="a" style="left:353.0px;top:801.8px;width:149.9px;height:60px;border-radius:4px 4px 0 0;background:linear-gradient(#a6a6a6,#8c8c8c 40%,#5e5e5e)"></div>
<div class="a" style="left:358.5px;top:807.2px;width:138.9px;height:36px;border-radius:3.5px;background:#c0c068;box-shadow:inset 0 1px 2px rgba(0,0,0,.35)"></div>
<div class="t" style="left:417.4px;top:848.8px;font-size:10.60px;color:#1e1e1e;">60%</div>
<div class="a" style="left:505.0px;top:801.8px;width:149.9px;height:60px;border-radius:4px 4px 0 0;background:linear-gradient(#a6a6a6,#8c8c8c 40%,#5e5e5e)"></div>
<div class="a" style="left:510.5px;top:807.2px;width:138.9px;height:36px;border-radius:3.5px;background:#c1c148;box-shadow:inset 0 1px 2px rgba(0,0,0,.35)"></div>
<div class="t" style="left:569.4px;top:848.8px;font-size:10.60px;color:#1e1e1e;">80%</div>
<div class="a" style="left:657.0px;top:801.8px;width:149.9px;height:60px;border-radius:4px 4px 0 0;background:linear-gradient(#1a1a1a,#222 60%,#2a2a2a)"></div>
<div class="a" style="left:662.5px;top:807.2px;width:138.9px;height:36px;border-radius:3.5px;background:#c3c300;box-shadow:inset 0 1px 2px rgba(0,0,0,.35)"></div>
<div class="t" style="left:718.4px;top:848.8px;font-size:10.60px;font-weight:bold;color:#fff;">100%</div>
<div class="a" style="left:1240px;top:801.8px;width:47.8px;height:60px;border-radius:4px 4px 0 0;background:linear-gradient(#a6a6a6,#8c8c8c 40%,#5e5e5e)"></div>
<div class="a" style="left:1240px;top:819.3px;width:47.8px;height:1px;background:#4a4a4a"></div>
<div class="a" style="left:1256.5px;top:803.5px;width:15px;height:15px;border-radius:50%;background:linear-gradient(#7c7c7c,#9a9a9a)"></div>
<div class="a" style="left:1260px;top:808px;border-left:4px solid transparent;border-right:4px solid transparent;border-bottom:4.5px solid #1a1a1a"></div>
<div class="a" style="left:1248.2px;top:826.7px;width:31.4px;height:30.5px;box-sizing:border-box;border:2px solid #2a2a2a;border-radius:5px;background:linear-gradient(#c8c8c8,#b4b4b4 55%,#6e6e6e 56%,#7a7a7a)"></div>
<div class="a" style="left:1256.9px;top:834.7px;width:13.7px;height:13.8px;background:#000"></div>
<div class="a" style="left:1289.15px;top:801.8px;width:45.90px;height:30px;background:linear-gradient(#acacac,#8e8e8e 50%,#6c6c6c);border-radius:4px 0 0 4px"></div>
<div class="a" style="left:1336.15px;top:801.8px;width:43.90px;height:30px;background:linear-gradient(#acacac,#8e8e8e 50%,#6c6c6c);border-radius:0"></div>
<div class="a" style="left:1381.15px;top:801.8px;width:43.80px;height:30px;background:linear-gradient(#acacac,#8e8e8e 50%,#6c6c6c);border-radius:0"></div>
<div class="a" style="left:1426.05px;top:801.8px;width:43.80px;height:30px;background:linear-gradient(#acacac,#8e8e8e 50%,#6c6c6c);border-radius:0"></div>
<div class="a" style="left:1470.95px;top:801.8px;width:44.00px;height:30px;background:linear-gradient(#acacac,#8e8e8e 50%,#6c6c6c);border-radius:0"></div>
<div class="a" style="left:1516.05px;top:801.8px;width:44.40px;height:30px;background:linear-gradient(#acacac,#8e8e8e 50%,#6c6c6c);border-radius:0"></div>
<div class="a" style="left:1301.8px;top:806.8px;width:20px;height:20.2px;border-radius:50%;background:linear-gradient(#767676,#a6a6a6)"></div>
<div class="a" style="left:1348.2px;top:806.8px;width:20px;height:20.2px;border-radius:50%;background:linear-gradient(#767676,#a6a6a6)"></div>
<div class="a" style="left:1392.9px;top:806.8px;width:20px;height:20.2px;border-radius:50%;background:linear-gradient(#767676,#a6a6a6)"></div>
<div class="a" style="left:1437.6px;top:806.8px;width:20px;height:20.2px;border-radius:50%;background:linear-gradient(#767676,#a6a6a6)"></div>
<div class="a" style="left:1483.5px;top:806.8px;width:20px;height:20.2px;border-radius:50%;background:linear-gradient(#767676,#a6a6a6)"></div>
<div class="a" style="left:1528.9px;top:806.8px;width:20px;height:20.2px;border-radius:50%;background:linear-gradient(#767676,#a6a6a6)"></div>
<div class="a" style="left:1289.1px;top:832.8px;width:135.8px;height:29px;background:linear-gradient(#acacac,#8e8e8e 50%,#6c6c6c);border-radius:4px 0 0 0"></div>
<div class="a" style="left:1426.1px;top:832.8px;width:134px;height:29px;background:linear-gradient(#acacac,#8e8e8e 50%,#6c6c6c)"></div>
<div class="a" style="left:1309.8px;top:838px;width:20px;height:20.2px;border-radius:50%;background:linear-gradient(#767676,#a6a6a6)"></div>
<div class="a" style="left:1523.3px;top:838px;width:20px;height:20.2px;border-radius:50%;background:linear-gradient(#767676,#a6a6a6)"></div>
<svg class="a" style="left:1289px;top:800px" width="268" height="61" viewBox="1289 800 268 61" ><rect x="1308.1" y="813.1" width="7.9" height="7.8" fill="#242424"/><path d="M1354.9 812.6L1364.1 817.7L1354.9 822.8Z" fill="#242424"/><path d="M1400.3 812.4H1397.8V822.7H1400.3M1405.7 812.4H1408.2V822.7H1405.7" stroke="#242424" stroke-width="2.1" fill="none"/><rect x="1400.6" y="816.1" width="1.9" height="1.9" fill="#242424"/><rect x="1403.7" y="816.1" width="1.9" height="1.9" fill="#242424"/><path d="M1448.1 816.8C1446.3 814.1 1442.1 814 1442.1 816.8C1442.1 819.6 1446.3 819.5 1448.1 816.8C1449.9 814.1 1454.1 814 1454.1 816.8C1454.1 819.6 1449.9 819.5 1448.1 816.8Z" stroke="#242424" stroke-width="1.45" fill="none"/><path d="M1488.7 817A4.4 4.4 0 0 1 1496.3 814M1497.4 818A4.4 4.4 0 0 1 1489.8 821" stroke="#242424" stroke-width="1.7" fill="none"/><path d="M1498.3 811.6V816.4H1493.5Z M1487.8 823.4V818.6H1492.6Z" fill="#242424"/><path d="M1320.2 843.5L1314.9 848.1L1320.2 852.7M1323.9 843.5L1318.6 848.1L1323.9 852.7" stroke="#2c2c2c" stroke-width="1.5" fill="none"/><path d="M1529.2 843.8L1534.4 848.4L1529.2 853M1533.2 843.8L1538.4 848.4L1533.2 853" stroke="#2c2c2c" stroke-width="1.5" fill="none"/></svg>
<div class="t" style="left:1346.3px;top:837.6px;font-size:21.50px;transform:scaleX(1.067);-webkit-text-stroke:.3px;color:#333;">Back</div>
<div class="t" style="left:1452.2px;top:837.6px;font-size:21.50px;transform:scaleX(1.199);-webkit-text-stroke:.3px;color:#333;">Next</div>
</body></html>
